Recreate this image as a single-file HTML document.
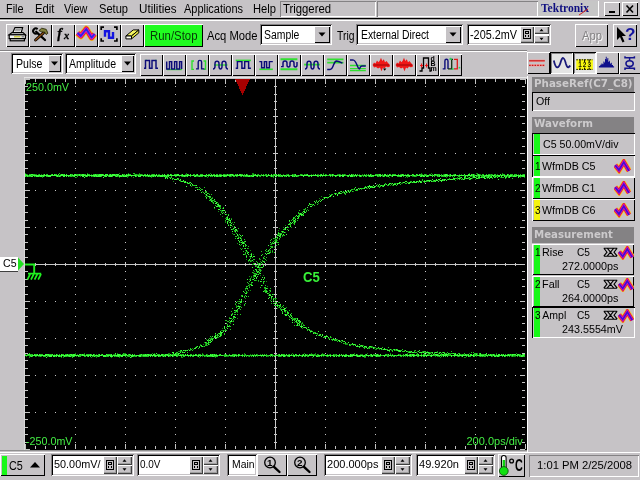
<!DOCTYPE html>
<html><head><meta charset="utf-8"><title>Tektronix</title><style>
html,body{margin:0;padding:0;background:#c6c3c6;overflow:hidden}
#s{will-change:transform;position:relative;width:640px;height:480px;background:#c6c3c6;overflow:hidden;font-family:"Liberation Sans",sans-serif}
#s div,#s span,#s svg{position:absolute}
#s span{white-space:pre;transform-origin:0 0}
.r{box-shadow:inset 1px 1px #fff,inset -1px -1px #000,inset -2px -2px #848284}
.r1{box-shadow:inset 1px 1px #fff,inset -1px -1px #000}
.r2{box-shadow:inset 1px 1px #fff,inset -1px -1px #404040,inset -2px -2px #a0a0a0}
.s{box-shadow:inset 1px 1px #848284,inset -1px -1px #fff,inset 2px 2px #000,inset -2px -2px #c6c3c6}
.s1{box-shadow:inset 1px 1px #848284,inset -1px -1px #fff}
.p{box-shadow:inset 1px 1px #000,inset -1px -1px #fff,inset 2px 2px #848284}
.p1{box-shadow:inset 1px 1px #000,inset -1px -1px #fff}
</style></head><body><div id="s">
<div style="left:25px;top:79px;width:502px;height:371px;background:#000;"></div>
<svg style="left:25px;top:79px" width="501" height="371" viewBox="0 0 501 371" shape-rendering="crispEdges"><path d="M10 37.5h1M10 74.5h1M10 111.5h1M10 148.5h1M10 222.5h1M10 259.5h1M10 296.5h1M10 333.5h1M20 37.5h1M20 74.5h1M20 111.5h1M20 148.5h1M20 222.5h1M20 259.5h1M20 296.5h1M20 333.5h1M30 37.5h1M30 74.5h1M30 111.5h1M30 148.5h1M30 222.5h1M30 259.5h1M30 296.5h1M30 333.5h1M40 37.5h1M40 74.5h1M40 111.5h1M40 148.5h1M40 222.5h1M40 259.5h1M40 296.5h1M40 333.5h1M50 7.5h1M50 15.5h1M50 22.5h1M50 30.5h1M50 37.5h1M50 44.5h1M50 52.5h1M50 59.5h1M50 67.5h1M50 74.5h1M50 81.5h1M50 89.5h1M50 96.5h1M50 104.5h1M50 111.5h1M50 118.5h1M50 126.5h1M50 133.5h1M50 141.5h1M50 148.5h1M50 155.5h1M50 163.5h1M50 170.5h1M50 178.5h1M50 185.5h1M50 192.5h1M50 200.5h1M50 207.5h1M50 215.5h1M50 222.5h1M50 229.5h1M50 237.5h1M50 244.5h1M50 252.5h1M50 259.5h1M50 266.5h1M50 274.5h1M50 281.5h1M50 289.5h1M50 296.5h1M50 303.5h1M50 311.5h1M50 318.5h1M50 326.5h1M50 333.5h1M50 340.5h1M50 348.5h1M50 355.5h1M50 363.5h1M60 37.5h1M60 74.5h1M60 111.5h1M60 148.5h1M60 222.5h1M60 259.5h1M60 296.5h1M60 333.5h1M70 37.5h1M70 74.5h1M70 111.5h1M70 148.5h1M70 222.5h1M70 259.5h1M70 296.5h1M70 333.5h1M80 37.5h1M80 74.5h1M80 111.5h1M80 148.5h1M80 222.5h1M80 259.5h1M80 296.5h1M80 333.5h1M90 37.5h1M90 74.5h1M90 111.5h1M90 148.5h1M90 222.5h1M90 259.5h1M90 296.5h1M90 333.5h1M100 7.5h1M100 15.5h1M100 22.5h1M100 30.5h1M100 37.5h1M100 44.5h1M100 52.5h1M100 59.5h1M100 67.5h1M100 74.5h1M100 81.5h1M100 89.5h1M100 96.5h1M100 104.5h1M100 111.5h1M100 118.5h1M100 126.5h1M100 133.5h1M100 141.5h1M100 148.5h1M100 155.5h1M100 163.5h1M100 170.5h1M100 178.5h1M100 185.5h1M100 192.5h1M100 200.5h1M100 207.5h1M100 215.5h1M100 222.5h1M100 229.5h1M100 237.5h1M100 244.5h1M100 252.5h1M100 259.5h1M100 266.5h1M100 274.5h1M100 281.5h1M100 289.5h1M100 296.5h1M100 303.5h1M100 311.5h1M100 318.5h1M100 326.5h1M100 333.5h1M100 340.5h1M100 348.5h1M100 355.5h1M100 363.5h1M110 37.5h1M110 74.5h1M110 111.5h1M110 148.5h1M110 222.5h1M110 259.5h1M110 296.5h1M110 333.5h1M120 37.5h1M120 74.5h1M120 111.5h1M120 148.5h1M120 222.5h1M120 259.5h1M120 296.5h1M120 333.5h1M130 37.5h1M130 74.5h1M130 111.5h1M130 148.5h1M130 222.5h1M130 259.5h1M130 296.5h1M130 333.5h1M140 37.5h1M140 74.5h1M140 111.5h1M140 148.5h1M140 222.5h1M140 259.5h1M140 296.5h1M140 333.5h1M150 7.5h1M150 15.5h1M150 22.5h1M150 30.5h1M150 37.5h1M150 44.5h1M150 52.5h1M150 59.5h1M150 67.5h1M150 74.5h1M150 81.5h1M150 89.5h1M150 96.5h1M150 104.5h1M150 111.5h1M150 118.5h1M150 126.5h1M150 133.5h1M150 141.5h1M150 148.5h1M150 155.5h1M150 163.5h1M150 170.5h1M150 178.5h1M150 185.5h1M150 192.5h1M150 200.5h1M150 207.5h1M150 215.5h1M150 222.5h1M150 229.5h1M150 237.5h1M150 244.5h1M150 252.5h1M150 259.5h1M150 266.5h1M150 274.5h1M150 281.5h1M150 289.5h1M150 296.5h1M150 303.5h1M150 311.5h1M150 318.5h1M150 326.5h1M150 333.5h1M150 340.5h1M150 348.5h1M150 355.5h1M150 363.5h1M160 37.5h1M160 74.5h1M160 111.5h1M160 148.5h1M160 222.5h1M160 259.5h1M160 296.5h1M160 333.5h1M170 37.5h1M170 74.5h1M170 111.5h1M170 148.5h1M170 222.5h1M170 259.5h1M170 296.5h1M170 333.5h1M180 37.5h1M180 74.5h1M180 111.5h1M180 148.5h1M180 222.5h1M180 259.5h1M180 296.5h1M180 333.5h1M190 37.5h1M190 74.5h1M190 111.5h1M190 148.5h1M190 222.5h1M190 259.5h1M190 296.5h1M190 333.5h1M200 7.5h1M200 15.5h1M200 22.5h1M200 30.5h1M200 37.5h1M200 44.5h1M200 52.5h1M200 59.5h1M200 67.5h1M200 74.5h1M200 81.5h1M200 89.5h1M200 96.5h1M200 104.5h1M200 111.5h1M200 118.5h1M200 126.5h1M200 133.5h1M200 141.5h1M200 148.5h1M200 155.5h1M200 163.5h1M200 170.5h1M200 178.5h1M200 185.5h1M200 192.5h1M200 200.5h1M200 207.5h1M200 215.5h1M200 222.5h1M200 229.5h1M200 237.5h1M200 244.5h1M200 252.5h1M200 259.5h1M200 266.5h1M200 274.5h1M200 281.5h1M200 289.5h1M200 296.5h1M200 303.5h1M200 311.5h1M200 318.5h1M200 326.5h1M200 333.5h1M200 340.5h1M200 348.5h1M200 355.5h1M200 363.5h1M210 37.5h1M210 74.5h1M210 111.5h1M210 148.5h1M210 222.5h1M210 259.5h1M210 296.5h1M210 333.5h1M220 37.5h1M220 74.5h1M220 111.5h1M220 148.5h1M220 222.5h1M220 259.5h1M220 296.5h1M220 333.5h1M230 37.5h1M230 74.5h1M230 111.5h1M230 148.5h1M230 222.5h1M230 259.5h1M230 296.5h1M230 333.5h1M240 37.5h1M240 74.5h1M240 111.5h1M240 148.5h1M240 222.5h1M240 259.5h1M240 296.5h1M240 333.5h1M250 37.5h1M250 74.5h1M250 111.5h1M250 148.5h1M250 222.5h1M250 259.5h1M250 296.5h1M250 333.5h1M260 37.5h1M260 74.5h1M260 111.5h1M260 148.5h1M260 222.5h1M260 259.5h1M260 296.5h1M260 333.5h1M270 37.5h1M270 74.5h1M270 111.5h1M270 148.5h1M270 222.5h1M270 259.5h1M270 296.5h1M270 333.5h1M280 37.5h1M280 74.5h1M280 111.5h1M280 148.5h1M280 222.5h1M280 259.5h1M280 296.5h1M280 333.5h1M290 37.5h1M290 74.5h1M290 111.5h1M290 148.5h1M290 222.5h1M290 259.5h1M290 296.5h1M290 333.5h1M300 7.5h1M300 15.5h1M300 22.5h1M300 30.5h1M300 37.5h1M300 44.5h1M300 52.5h1M300 59.5h1M300 67.5h1M300 74.5h1M300 81.5h1M300 89.5h1M300 96.5h1M300 104.5h1M300 111.5h1M300 118.5h1M300 126.5h1M300 133.5h1M300 141.5h1M300 148.5h1M300 155.5h1M300 163.5h1M300 170.5h1M300 178.5h1M300 185.5h1M300 192.5h1M300 200.5h1M300 207.5h1M300 215.5h1M300 222.5h1M300 229.5h1M300 237.5h1M300 244.5h1M300 252.5h1M300 259.5h1M300 266.5h1M300 274.5h1M300 281.5h1M300 289.5h1M300 296.5h1M300 303.5h1M300 311.5h1M300 318.5h1M300 326.5h1M300 333.5h1M300 340.5h1M300 348.5h1M300 355.5h1M300 363.5h1M310 37.5h1M310 74.5h1M310 111.5h1M310 148.5h1M310 222.5h1M310 259.5h1M310 296.5h1M310 333.5h1M320 37.5h1M320 74.5h1M320 111.5h1M320 148.5h1M320 222.5h1M320 259.5h1M320 296.5h1M320 333.5h1M330 37.5h1M330 74.5h1M330 111.5h1M330 148.5h1M330 222.5h1M330 259.5h1M330 296.5h1M330 333.5h1M340 37.5h1M340 74.5h1M340 111.5h1M340 148.5h1M340 222.5h1M340 259.5h1M340 296.5h1M340 333.5h1M350 7.5h1M350 15.5h1M350 22.5h1M350 30.5h1M350 37.5h1M350 44.5h1M350 52.5h1M350 59.5h1M350 67.5h1M350 74.5h1M350 81.5h1M350 89.5h1M350 96.5h1M350 104.5h1M350 111.5h1M350 118.5h1M350 126.5h1M350 133.5h1M350 141.5h1M350 148.5h1M350 155.5h1M350 163.5h1M350 170.5h1M350 178.5h1M350 185.5h1M350 192.5h1M350 200.5h1M350 207.5h1M350 215.5h1M350 222.5h1M350 229.5h1M350 237.5h1M350 244.5h1M350 252.5h1M350 259.5h1M350 266.5h1M350 274.5h1M350 281.5h1M350 289.5h1M350 296.5h1M350 303.5h1M350 311.5h1M350 318.5h1M350 326.5h1M350 333.5h1M350 340.5h1M350 348.5h1M350 355.5h1M350 363.5h1M360 37.5h1M360 74.5h1M360 111.5h1M360 148.5h1M360 222.5h1M360 259.5h1M360 296.5h1M360 333.5h1M370 37.5h1M370 74.5h1M370 111.5h1M370 148.5h1M370 222.5h1M370 259.5h1M370 296.5h1M370 333.5h1M380 37.5h1M380 74.5h1M380 111.5h1M380 148.5h1M380 222.5h1M380 259.5h1M380 296.5h1M380 333.5h1M390 37.5h1M390 74.5h1M390 111.5h1M390 148.5h1M390 222.5h1M390 259.5h1M390 296.5h1M390 333.5h1M400 7.5h1M400 15.5h1M400 22.5h1M400 30.5h1M400 37.5h1M400 44.5h1M400 52.5h1M400 59.5h1M400 67.5h1M400 74.5h1M400 81.5h1M400 89.5h1M400 96.5h1M400 104.5h1M400 111.5h1M400 118.5h1M400 126.5h1M400 133.5h1M400 141.5h1M400 148.5h1M400 155.5h1M400 163.5h1M400 170.5h1M400 178.5h1M400 185.5h1M400 192.5h1M400 200.5h1M400 207.5h1M400 215.5h1M400 222.5h1M400 229.5h1M400 237.5h1M400 244.5h1M400 252.5h1M400 259.5h1M400 266.5h1M400 274.5h1M400 281.5h1M400 289.5h1M400 296.5h1M400 303.5h1M400 311.5h1M400 318.5h1M400 326.5h1M400 333.5h1M400 340.5h1M400 348.5h1M400 355.5h1M400 363.5h1M410 37.5h1M410 74.5h1M410 111.5h1M410 148.5h1M410 222.5h1M410 259.5h1M410 296.5h1M410 333.5h1M420 37.5h1M420 74.5h1M420 111.5h1M420 148.5h1M420 222.5h1M420 259.5h1M420 296.5h1M420 333.5h1M430 37.5h1M430 74.5h1M430 111.5h1M430 148.5h1M430 222.5h1M430 259.5h1M430 296.5h1M430 333.5h1M440 37.5h1M440 74.5h1M440 111.5h1M440 148.5h1M440 222.5h1M440 259.5h1M440 296.5h1M440 333.5h1M450 7.5h1M450 15.5h1M450 22.5h1M450 30.5h1M450 37.5h1M450 44.5h1M450 52.5h1M450 59.5h1M450 67.5h1M450 74.5h1M450 81.5h1M450 89.5h1M450 96.5h1M450 104.5h1M450 111.5h1M450 118.5h1M450 126.5h1M450 133.5h1M450 141.5h1M450 148.5h1M450 155.5h1M450 163.5h1M450 170.5h1M450 178.5h1M450 185.5h1M450 192.5h1M450 200.5h1M450 207.5h1M450 215.5h1M450 222.5h1M450 229.5h1M450 237.5h1M450 244.5h1M450 252.5h1M450 259.5h1M450 266.5h1M450 274.5h1M450 281.5h1M450 289.5h1M450 296.5h1M450 303.5h1M450 311.5h1M450 318.5h1M450 326.5h1M450 333.5h1M450 340.5h1M450 348.5h1M450 355.5h1M450 363.5h1M460 37.5h1M460 74.5h1M460 111.5h1M460 148.5h1M460 222.5h1M460 259.5h1M460 296.5h1M460 333.5h1M470 37.5h1M470 74.5h1M470 111.5h1M470 148.5h1M470 222.5h1M470 259.5h1M470 296.5h1M470 333.5h1M480 37.5h1M480 74.5h1M480 111.5h1M480 148.5h1M480 222.5h1M480 259.5h1M480 296.5h1M480 333.5h1M490 37.5h1M490 74.5h1M490 111.5h1M490 148.5h1M490 222.5h1M490 259.5h1M490 296.5h1M490 333.5h1" stroke="#c4c4c4" stroke-width="1" fill="none"/><path d="M0.5 0v5M0.5 370v-5M10.5 0v3M10.5 370v-3M20.5 0v3M20.5 370v-3M30.5 0v3M30.5 370v-3M40.5 0v3M40.5 370v-3M50.5 0v5M50.5 370v-5M60.5 0v3M60.5 370v-3M70.5 0v3M70.5 370v-3M80.5 0v3M80.5 370v-3M90.5 0v3M90.5 370v-3M100.5 0v5M100.5 370v-5M110.5 0v3M110.5 370v-3M120.5 0v3M120.5 370v-3M130.5 0v3M130.5 370v-3M140.5 0v3M140.5 370v-3M150.5 0v5M150.5 370v-5M160.5 0v3M160.5 370v-3M170.5 0v3M170.5 370v-3M180.5 0v3M180.5 370v-3M190.5 0v3M190.5 370v-3M200.5 0v5M200.5 370v-5M210.5 0v3M210.5 370v-3M220.5 0v3M220.5 370v-3M230.5 0v3M230.5 370v-3M240.5 0v3M240.5 370v-3M250.5 0v5M250.5 370v-5M260.5 0v3M260.5 370v-3M270.5 0v3M270.5 370v-3M280.5 0v3M280.5 370v-3M290.5 0v3M290.5 370v-3M300.5 0v5M300.5 370v-5M310.5 0v3M310.5 370v-3M320.5 0v3M320.5 370v-3M330.5 0v3M330.5 370v-3M340.5 0v3M340.5 370v-3M350.5 0v5M350.5 370v-5M360.5 0v3M360.5 370v-3M370.5 0v3M370.5 370v-3M380.5 0v3M380.5 370v-3M390.5 0v3M390.5 370v-3M400.5 0v5M400.5 370v-5M410.5 0v3M410.5 370v-3M420.5 0v3M420.5 370v-3M430.5 0v3M430.5 370v-3M440.5 0v3M440.5 370v-3M450.5 0v5M450.5 370v-5M460.5 0v3M460.5 370v-3M470.5 0v3M470.5 370v-3M480.5 0v3M480.5 370v-3M490.5 0v3M490.5 370v-3M500.5 0v5M500.5 370v-5M0 0.5h5M500 0.5h-5M0 7.5h3M500 7.5h-3M0 15.5h3M500 15.5h-3M0 22.5h3M500 22.5h-3M0 30.5h3M500 30.5h-3M0 37.5h5M500 37.5h-5M0 44.5h3M500 44.5h-3M0 52.5h3M500 52.5h-3M0 59.5h3M500 59.5h-3M0 67.5h3M500 67.5h-3M0 74.5h5M500 74.5h-5M0 81.5h3M500 81.5h-3M0 89.5h3M500 89.5h-3M0 96.5h3M500 96.5h-3M0 104.5h3M500 104.5h-3M0 111.5h5M500 111.5h-5M0 118.5h3M500 118.5h-3M0 126.5h3M500 126.5h-3M0 133.5h3M500 133.5h-3M0 141.5h3M500 141.5h-3M0 148.5h5M500 148.5h-5M0 155.5h3M500 155.5h-3M0 163.5h3M500 163.5h-3M0 170.5h3M500 170.5h-3M0 178.5h3M500 178.5h-3M0 185.5h5M500 185.5h-5M0 192.5h3M500 192.5h-3M0 200.5h3M500 200.5h-3M0 207.5h3M500 207.5h-3M0 215.5h3M500 215.5h-3M0 222.5h5M500 222.5h-5M0 229.5h3M500 229.5h-3M0 237.5h3M500 237.5h-3M0 244.5h3M500 244.5h-3M0 252.5h3M500 252.5h-3M0 259.5h5M500 259.5h-5M0 266.5h3M500 266.5h-3M0 274.5h3M500 274.5h-3M0 281.5h3M500 281.5h-3M0 289.5h3M500 289.5h-3M0 296.5h5M500 296.5h-5M0 303.5h3M500 303.5h-3M0 311.5h3M500 311.5h-3M0 318.5h3M500 318.5h-3M0 326.5h3M500 326.5h-3M0 333.5h5M500 333.5h-5M0 340.5h3M500 340.5h-3M0 348.5h3M500 348.5h-3M0 355.5h3M500 355.5h-3M0 363.5h3M500 363.5h-3M0 370.5h5M500 370.5h-5" stroke="#c4c4c4" stroke-width="1" fill="none"/><path d="M0 185.5H500M250.5 0V370M10.5 184v3M20.5 184v3M30.5 184v3M40.5 184v3M50.5 183v5M60.5 184v3M70.5 184v3M80.5 184v3M90.5 184v3M100.5 183v5M110.5 184v3M120.5 184v3M130.5 184v3M140.5 184v3M150.5 183v5M160.5 184v3M170.5 184v3M180.5 184v3M190.5 184v3M200.5 183v5M210.5 184v3M220.5 184v3M230.5 184v3M240.5 184v3M250.5 183v5M260.5 184v3M270.5 184v3M280.5 184v3M290.5 184v3M300.5 183v5M310.5 184v3M320.5 184v3M330.5 184v3M340.5 184v3M350.5 183v5M360.5 184v3M370.5 184v3M380.5 184v3M390.5 184v3M400.5 183v5M410.5 184v3M420.5 184v3M430.5 184v3M440.5 184v3M450.5 183v5M460.5 184v3M470.5 184v3M480.5 184v3M490.5 184v3M249 7.5h3M249 15.5h3M249 22.5h3M249 30.5h3M248 37.5h5M249 44.5h3M249 52.5h3M249 59.5h3M249 67.5h3M248 74.5h5M249 81.5h3M249 89.5h3M249 96.5h3M249 104.5h3M248 111.5h5M249 118.5h3M249 126.5h3M249 133.5h3M249 141.5h3M248 148.5h5M249 155.5h3M249 163.5h3M249 170.5h3M249 178.5h3M248 185.5h5M249 192.5h3M249 200.5h3M249 207.5h3M249 215.5h3M248 222.5h5M249 229.5h3M249 237.5h3M249 244.5h3M249 252.5h3M248 259.5h5M249 266.5h3M249 274.5h3M249 281.5h3M249 289.5h3M248 296.5h5M249 303.5h3M249 311.5h3M249 318.5h3M249 326.5h3M248 333.5h5M249 340.5h3M249 348.5h3M249 355.5h3M249 363.5h3" stroke="#c8c8c8" stroke-width="1" fill="none"/><path d="M210 0L225 0L217.5 16Z" fill="#a80000"/><path d="M0 94.5h1M1 97.5h1M1 277.5h1M2 95.5h1M4 277.5h1M4 278.5h1M10 95.5h1M10 97.5h1M11 95.5h1M11 277.5h1M13 95.5h1M13 277.5h1M14 277.5h1M16 95.5h1M16 277.5h1M17 98.5h1M18 95.5h1M19 97.5h1M23 277.5h1M29 275.5h1M30 277.5h1M32 275.5h1M35 95.5h1M36 278.5h1M38 277.5h1M38 278.5h1M42 277.5h1M43 275.5h1M44 97.5h1M46 277.5h1M47 97.5h1M50 274.5h1M51 98.5h1M51 277.5h1M52 275.5h1M55 97.5h1M59 274.5h1M62 94.5h1M64 97.5h1M66 95.5h1M66 278.5h1M67 97.5h1M68 277.5h1M70 277.5h1M71 275.5h1M71 277.5h1M71 278.5h1M86 95.5h1M86 278.5h1M88 275.5h1M89 275.5h1M90 277.5h1M92 274.5h1M93 97.5h1M94 94.5h1M94 98.5h1M94 278.5h1M95 277.5h1M98 95.5h1M99 274.5h1M100 274.5h1M101 278.5h1M102 95.5h1M102 97.5h1M102 98.5h1M102 277.5h1M103 94.5h1M103 97.5h1M106 278.5h1M108 98.5h1M109 95.5h1M109 277.5h1M112 95.5h1M113 95.5h1M113 277.5h1M114 94.5h1M114 275.5h1M116 277.5h1M117 95.5h1M117 275.5h1M117 277.5h1M121 97.5h1M122 97.5h1M124 95.5h1M126 95.5h1M126 98.5h1M127 274.5h1M129 97.5h1M129 274.5h1M130 275.5h1M131 277.5h1M133 95.5h1M134 95.5h1M137 277.5h1M139 275.5h1M139 277.5h1M143 274.5h1M144 274.5h1M144 275.5h1M144 277.5h1M145 98.5h1M145 277.5h1M146 275.5h1M148 102.5h1M148 277.5h1M151 97.5h1M152 100.5h1M152 274.5h1M153 272.5h1M154 97.5h1M154 272.5h1M155 102.5h1M156 95.5h1M156 97.5h1M156 272.5h1M156 275.5h1M156 278.5h1M157 272.5h1M157 278.5h1M160 95.5h1M160 272.5h1M161 94.5h1M161 95.5h1M161 97.5h1M161 103.5h1M163 270.5h1M165 271.5h1M166 107.5h1M167 269.5h1M168 270.5h1M168 275.5h1M171 97.5h1M171 267.5h1M172 97.5h1M172 277.5h1M173 110.5h1M174 278.5h1M175 265.5h1M177 112.5h1M177 274.5h1M177 277.5h1M178 265.5h1M178 267.5h1M178 275.5h1M179 97.5h1M179 263.5h1M180 115.5h1M180 264.5h1M180 265.5h1M180 277.5h1M181 260.5h1M181 277.5h1M182 98.5h1M182 116.5h1M182 117.5h1M182 266.5h1M182 275.5h1M184 119.5h1M184 265.5h1M185 94.5h1M185 259.5h1M185 262.5h1M186 97.5h1M186 258.5h1M187 118.5h1M187 123.5h1M189 121.5h1M189 129.5h1M190 97.5h1M190 255.5h1M190 275.5h1M190 278.5h1M191 256.5h1M192 126.5h1M193 124.5h1M193 132.5h1M193 258.5h1M194 128.5h1M194 255.5h1M195 128.5h1M196 95.5h1M196 131.5h1M196 132.5h1M196 251.5h1M197 129.5h1M197 132.5h1M197 137.5h1M197 249.5h1M197 251.5h1M199 134.5h1M199 251.5h1M199 275.5h1M200 95.5h1M200 139.5h1M200 142.5h1M200 143.5h1M201 95.5h1M201 139.5h1M201 248.5h1M201 275.5h1M201 277.5h1M202 277.5h1M203 95.5h1M203 141.5h1M203 142.5h1M203 145.5h1M203 277.5h1M204 238.5h1M205 243.5h1M205 244.5h1M205 277.5h1M206 97.5h1M206 139.5h1M206 277.5h1M207 143.5h1M207 147.5h1M207 154.5h1M207 242.5h1M207 277.5h1M208 95.5h1M208 150.5h1M208 155.5h1M208 241.5h1M209 149.5h1M209 152.5h1M209 240.5h1M210 153.5h1M210 224.5h1M210 232.5h1M211 95.5h1M211 226.5h1M211 227.5h1M211 275.5h1M212 97.5h1M212 151.5h1M212 164.5h1M212 222.5h1M212 233.5h1M212 239.5h1M213 156.5h1M213 157.5h1M213 222.5h1M213 226.5h1M214 158.5h1M215 97.5h1M215 163.5h1M215 166.5h1M215 169.5h1M215 225.5h1M216 159.5h1M216 217.5h1M217 169.5h1M218 222.5h1M219 97.5h1M219 163.5h1M219 274.5h1M219 275.5h1M220 171.5h1M220 175.5h1M220 210.5h1M220 211.5h1M220 219.5h1M221 180.5h1M221 208.5h1M222 95.5h1M222 172.5h1M222 210.5h1M222 213.5h1M223 169.5h1M223 182.5h1M223 277.5h1M224 177.5h1M224 184.5h1M224 197.5h1M224 200.5h1M224 205.5h1M224 206.5h1M224 207.5h1M225 171.5h1M225 175.5h1M225 178.5h1M225 181.5h1M225 211.5h1M225 275.5h1M226 181.5h1M226 182.5h1M226 197.5h1M226 198.5h1M226 204.5h1M227 94.5h1M227 95.5h1M227 275.5h1M228 94.5h1M228 175.5h1M228 182.5h1M228 184.5h1M228 193.5h1M228 194.5h1M228 197.5h1M228 198.5h1M229 95.5h1M229 192.5h1M229 195.5h1M230 195.5h1M231 97.5h1M231 186.5h1M231 187.5h1M231 194.5h1M231 201.5h1M232 95.5h1M232 184.5h1M232 187.5h1M232 195.5h1M232 275.5h1M232 277.5h1M233 184.5h1M233 190.5h1M233 193.5h1M233 202.5h1M234 97.5h1M234 180.5h1M234 189.5h1M235 180.5h1M235 182.5h1M235 184.5h1M235 186.5h1M235 196.5h1M235 275.5h1M236 191.5h1M237 182.5h1M237 206.5h1M238 97.5h1M238 196.5h1M239 209.5h1M239 212.5h1M241 181.5h1M241 202.5h1M242 172.5h1M242 207.5h1M242 277.5h1M243 216.5h1M243 277.5h1M244 171.5h1M244 213.5h1M245 97.5h1M245 165.5h1M245 171.5h1M245 172.5h1M245 221.5h1M246 164.5h1M246 220.5h1M247 171.5h1M247 173.5h1M248 98.5h1M249 159.5h1M249 161.5h1M249 167.5h1M249 168.5h1M249 219.5h1M249 222.5h1M250 98.5h1M250 221.5h1M251 157.5h1M251 219.5h1M251 275.5h1M252 155.5h1M252 161.5h1M252 229.5h1M253 151.5h1M253 155.5h1M253 223.5h1M253 228.5h1M254 95.5h1M254 149.5h1M254 155.5h1M254 160.5h1M255 230.5h1M256 277.5h1M257 157.5h1M258 95.5h1M258 148.5h1M258 153.5h1M258 156.5h1M259 149.5h1M259 235.5h1M260 97.5h1M260 146.5h1M260 153.5h1M260 233.5h1M260 277.5h1M261 95.5h1M261 228.5h1M261 231.5h1M262 95.5h1M262 277.5h1M263 275.5h1M264 238.5h1M265 144.5h1M266 148.5h1M267 239.5h1M267 274.5h1M268 95.5h1M268 140.5h1M268 144.5h1M268 239.5h1M269 139.5h1M269 243.5h1M270 97.5h1M270 139.5h1M270 141.5h1M270 143.5h1M271 239.5h1M271 277.5h1M272 241.5h1M273 97.5h1M273 246.5h1M274 244.5h1M276 244.5h1M276 277.5h1M277 95.5h1M277 136.5h1M277 243.5h1M277 249.5h1M277 275.5h1M278 130.5h1M278 135.5h1M278 245.5h1M279 131.5h1M279 274.5h1M280 95.5h1M280 130.5h1M281 248.5h1M281 275.5h1M282 130.5h1M282 275.5h1M285 251.5h1M285 253.5h1M286 95.5h1M286 251.5h1M286 274.5h1M287 125.5h1M287 278.5h1M288 95.5h1M288 275.5h1M289 254.5h1M290 124.5h1M290 274.5h1M290 275.5h1M292 95.5h1M292 255.5h1M293 95.5h1M293 124.5h1M293 275.5h1M294 119.5h1M295 120.5h1M296 117.5h1M297 274.5h1M298 94.5h1M298 118.5h1M298 120.5h1M298 277.5h1M299 258.5h1M300 97.5h1M301 95.5h1M301 277.5h1M302 119.5h1M303 259.5h1M303 277.5h1M304 115.5h1M304 259.5h1M304 275.5h1M306 95.5h1M306 258.5h1M309 275.5h1M310 275.5h1M311 97.5h1M312 95.5h1M312 260.5h1M313 95.5h1M313 113.5h1M315 95.5h1M317 262.5h1M318 95.5h1M318 113.5h1M318 275.5h1M319 264.5h1M320 95.5h1M320 265.5h1M321 264.5h1M321 265.5h1M322 111.5h1M322 113.5h1M322 264.5h1M322 265.5h1M324 112.5h1M325 265.5h1M326 111.5h1M327 95.5h1M328 97.5h1M328 110.5h1M328 112.5h1M328 266.5h1M329 274.5h1M329 275.5h1M331 277.5h1M332 275.5h1M334 95.5h1M334 109.5h1M335 275.5h1M336 110.5h1M336 267.5h1M336 275.5h1M337 95.5h1M337 275.5h1M338 266.5h1M339 278.5h1M340 268.5h1M340 278.5h1M341 109.5h1M342 109.5h1M342 274.5h1M343 97.5h1M343 269.5h1M345 268.5h1M345 277.5h1M346 95.5h1M347 267.5h1M347 268.5h1M349 269.5h1M349 275.5h1M350 268.5h1M350 270.5h1M350 275.5h1M350 277.5h1M351 270.5h1M352 105.5h1M352 107.5h1M353 269.5h1M353 275.5h1M354 97.5h1M354 107.5h1M354 270.5h1M355 277.5h1M357 97.5h1M357 270.5h1M360 105.5h1M362 95.5h1M362 275.5h1M364 98.5h1M364 270.5h1M365 106.5h1M365 274.5h1M366 97.5h1M366 104.5h1M366 270.5h1M366 271.5h1M367 106.5h1M370 270.5h1M370 271.5h1M371 104.5h1M371 277.5h1M374 275.5h1M375 95.5h1M375 275.5h1M375 277.5h1M376 104.5h1M377 103.5h1M377 104.5h1M379 271.5h1M380 95.5h1M380 98.5h1M380 277.5h1M382 97.5h1M382 98.5h1M382 274.5h1M383 103.5h1M383 272.5h1M384 277.5h1M386 103.5h1M386 273.5h1M387 97.5h1M388 97.5h1M389 271.5h1M389 277.5h1M391 97.5h1M392 272.5h1M393 102.5h1M396 94.5h1M396 274.5h1M397 95.5h1M397 97.5h1M397 272.5h1M399 273.5h1M401 95.5h1M401 274.5h1M402 102.5h1M402 272.5h1M403 102.5h1M403 275.5h1M404 275.5h1M405 273.5h1M405 277.5h1M406 94.5h1M406 101.5h1M410 277.5h1M412 272.5h1M412 277.5h1M413 274.5h1M413 275.5h1M413 277.5h1M414 101.5h1M415 278.5h1M418 95.5h1M420 274.5h1M421 97.5h1M421 98.5h1M424 95.5h1M424 275.5h1M425 274.5h1M428 95.5h1M428 98.5h1M430 101.5h1M431 275.5h1M432 98.5h1M432 99.5h1M432 100.5h1M432 277.5h1M434 95.5h1M434 98.5h1M434 277.5h1M436 95.5h1M436 275.5h1M436 277.5h1M437 100.5h1M439 275.5h1M439 278.5h1M440 278.5h1M443 98.5h1M444 94.5h1M444 99.5h1M444 274.5h1M446 97.5h1M447 97.5h1M447 98.5h1M447 99.5h1M449 95.5h1M450 100.5h1M451 94.5h1M451 98.5h1M451 277.5h1M452 94.5h1M452 97.5h1M452 274.5h1M452 275.5h1M454 277.5h1M455 95.5h1M456 277.5h1M458 277.5h1M461 98.5h1M462 99.5h1M464 98.5h1M464 275.5h1M465 95.5h1M467 95.5h1M467 98.5h1M467 277.5h1M469 97.5h1M471 274.5h1M471 277.5h1M472 95.5h1M472 97.5h1M474 277.5h1M475 98.5h1M477 94.5h1M477 275.5h1M482 97.5h1M482 277.5h1M486 277.5h1M488 277.5h1M489 277.5h1M490 277.5h1M491 274.5h1M493 95.5h1M495 98.5h1M497 95.5h1M499 98.5h1" stroke="#128a12" stroke-width="1" fill="none"/><path d="M0 275.5h1M1 95.5h1M2 275.5h1M2 276.5h1M3 96.5h1M3 97.5h1M3 276.5h1M4 95.5h1M4 97.5h1M4 274.5h1M4 276.5h1M5 95.5h1M5 97.5h1M5 275.5h1M5 277.5h1M6 96.5h1M6 275.5h1M6 276.5h1M7 96.5h1M7 275.5h1M7 277.5h1M8 95.5h1M9 95.5h1M9 97.5h1M10 275.5h1M10 277.5h1M11 275.5h1M14 95.5h1M14 97.5h1M15 275.5h1M15 277.5h1M16 275.5h1M17 97.5h1M17 275.5h1M18 277.5h1M19 277.5h1M20 277.5h1M21 95.5h1M21 97.5h1M22 95.5h1M22 97.5h1M22 276.5h1M22 277.5h1M24 275.5h1M25 275.5h1M26 95.5h1M26 275.5h1M27 276.5h1M30 95.5h1M31 95.5h1M31 97.5h1M33 96.5h1M33 97.5h1M34 94.5h1M34 96.5h1M34 275.5h1M35 97.5h1M35 276.5h1M35 277.5h1M37 275.5h1M38 95.5h1M38 275.5h1M40 275.5h1M40 277.5h1M41 275.5h1M41 277.5h1M43 277.5h1M44 275.5h1M45 97.5h1M45 276.5h1M46 95.5h1M46 96.5h1M46 97.5h1M47 95.5h1M47 275.5h1M47 277.5h1M47 278.5h1M48 97.5h1M49 277.5h1M50 98.5h1M50 275.5h1M51 95.5h1M52 95.5h1M52 96.5h1M52 97.5h1M53 95.5h1M53 96.5h1M54 276.5h1M54 277.5h1M55 95.5h1M55 96.5h1M55 276.5h1M55 277.5h1M56 95.5h1M56 275.5h1M56 276.5h1M58 275.5h1M59 95.5h1M59 275.5h1M59 277.5h1M60 95.5h1M60 97.5h1M60 276.5h1M60 277.5h1M61 275.5h1M62 97.5h1M62 275.5h1M62 277.5h1M63 95.5h1M63 275.5h1M64 95.5h1M64 275.5h1M66 97.5h1M66 275.5h1M67 277.5h1M68 95.5h1M68 97.5h1M69 95.5h1M69 275.5h1M69 276.5h1M70 97.5h1M71 95.5h1M72 95.5h1M72 96.5h1M72 277.5h1M73 95.5h1M73 275.5h1M73 276.5h1M74 277.5h1M76 97.5h1M76 275.5h1M77 276.5h1M78 95.5h1M79 97.5h1M81 96.5h1M81 276.5h1M81 277.5h1M82 275.5h1M82 277.5h1M83 96.5h1M83 97.5h1M83 275.5h1M83 277.5h1M84 95.5h1M84 275.5h1M85 275.5h1M87 97.5h1M87 276.5h1M89 277.5h1M90 95.5h1M90 97.5h1M90 275.5h1M91 96.5h1M91 277.5h1M92 97.5h1M92 277.5h1M93 96.5h1M94 277.5h1M95 275.5h1M96 96.5h1M97 97.5h1M97 275.5h1M98 274.5h1M98 275.5h1M99 95.5h1M99 96.5h1M99 275.5h1M100 277.5h1M101 276.5h1M103 275.5h1M103 276.5h1M103 277.5h1M104 95.5h1M104 276.5h1M104 277.5h1M105 95.5h1M105 275.5h1M106 97.5h1M108 94.5h1M108 277.5h1M109 94.5h1M109 275.5h1M110 95.5h1M110 276.5h1M110 277.5h1M111 95.5h1M111 96.5h1M111 97.5h1M111 277.5h1M112 96.5h1M114 95.5h1M114 96.5h1M115 95.5h1M115 275.5h1M116 95.5h1M116 276.5h1M117 276.5h1M118 97.5h1M118 275.5h1M118 277.5h1M119 95.5h1M119 275.5h1M119 277.5h1M120 95.5h1M120 97.5h1M120 277.5h1M121 275.5h1M121 277.5h1M122 276.5h1M122 277.5h1M123 277.5h1M124 97.5h1M124 275.5h1M125 96.5h1M125 275.5h1M126 97.5h1M127 95.5h1M127 97.5h1M127 277.5h1M128 95.5h1M129 95.5h1M129 277.5h1M132 96.5h1M132 275.5h1M133 97.5h1M133 275.5h1M134 97.5h1M134 275.5h1M134 277.5h1M135 277.5h1M137 95.5h1M138 97.5h1M138 275.5h1M138 276.5h1M140 97.5h1M141 96.5h1M141 98.5h1M141 276.5h1M142 95.5h1M142 97.5h1M142 98.5h1M143 95.5h1M143 275.5h1M144 98.5h1M145 276.5h1M146 95.5h1M146 97.5h1M146 98.5h1M147 99.5h1M147 100.5h1M147 275.5h1M148 99.5h1M148 275.5h1M148 276.5h1M149 95.5h1M150 95.5h1M150 97.5h1M151 95.5h1M151 273.5h1M151 274.5h1M151 275.5h1M151 277.5h1M152 273.5h1M152 275.5h1M152 276.5h1M152 277.5h1M153 99.5h1M153 100.5h1M153 276.5h1M155 101.5h1M155 271.5h1M155 272.5h1M155 275.5h1M156 277.5h1M157 97.5h1M157 275.5h1M157 276.5h1M158 97.5h1M158 102.5h1M158 273.5h1M158 275.5h1M158 277.5h1M159 102.5h1M159 271.5h1M159 276.5h1M159 277.5h1M160 97.5h1M161 271.5h1M161 276.5h1M162 104.5h1M162 273.5h1M163 95.5h1M163 277.5h1M164 103.5h1M164 104.5h1M165 97.5h1M165 105.5h1M165 269.5h1M165 270.5h1M165 275.5h1M165 277.5h1M166 96.5h1M166 270.5h1M166 275.5h1M167 106.5h1M167 271.5h1M167 276.5h1M167 277.5h1M168 95.5h1M168 106.5h1M168 277.5h1M169 95.5h1M169 96.5h1M169 106.5h1M170 106.5h1M170 108.5h1M170 268.5h1M171 95.5h1M171 108.5h1M171 275.5h1M172 108.5h1M172 276.5h1M173 96.5h1M173 97.5h1M173 269.5h1M173 275.5h1M174 96.5h1M174 108.5h1M174 110.5h1M174 267.5h1M174 275.5h1M175 95.5h1M175 97.5h1M175 109.5h1M175 266.5h1M175 275.5h1M175 277.5h1M176 95.5h1M176 97.5h1M176 110.5h1M176 267.5h1M177 95.5h1M177 97.5h1M177 110.5h1M177 275.5h1M177 276.5h1M178 113.5h1M178 276.5h1M179 108.5h1M179 267.5h1M179 276.5h1M179 277.5h1M180 112.5h1M180 113.5h1M180 117.5h1M180 266.5h1M180 276.5h1M181 96.5h1M181 97.5h1M181 112.5h1M181 113.5h1M181 119.5h1M181 263.5h1M181 264.5h1M181 265.5h1M181 266.5h1M181 275.5h1M182 264.5h1M182 276.5h1M183 95.5h1M183 97.5h1M183 114.5h1M183 260.5h1M183 261.5h1M183 262.5h1M183 264.5h1M183 277.5h1M184 95.5h1M184 115.5h1M184 118.5h1M184 121.5h1M184 259.5h1M184 263.5h1M184 277.5h1M185 97.5h1M185 117.5h1M185 118.5h1M185 121.5h1M185 257.5h1M185 260.5h1M185 277.5h1M186 115.5h1M186 119.5h1M186 120.5h1M186 121.5h1M186 259.5h1M186 260.5h1M186 275.5h1M186 277.5h1M187 97.5h1M187 119.5h1M187 121.5h1M187 122.5h1M187 259.5h1M187 261.5h1M188 95.5h1M188 121.5h1M188 123.5h1M188 124.5h1M188 259.5h1M188 275.5h1M188 276.5h1M189 95.5h1M189 122.5h1M189 277.5h1M190 126.5h1M190 277.5h1M191 95.5h1M191 259.5h1M191 275.5h1M191 277.5h1M192 95.5h1M192 123.5h1M192 256.5h1M192 257.5h1M192 258.5h1M192 277.5h1M193 96.5h1M193 97.5h1M193 127.5h1M193 254.5h1M193 256.5h1M193 276.5h1M194 95.5h1M194 97.5h1M194 275.5h1M195 95.5h1M195 126.5h1M195 127.5h1M195 129.5h1M195 131.5h1M195 135.5h1M195 254.5h1M195 257.5h1M195 276.5h1M196 97.5h1M196 133.5h1M196 255.5h1M196 256.5h1M198 95.5h1M198 97.5h1M198 128.5h1M198 133.5h1M198 251.5h1M198 276.5h1M199 95.5h1M199 254.5h1M199 255.5h1M199 276.5h1M199 277.5h1M200 97.5h1M200 132.5h1M200 141.5h1M200 241.5h1M200 250.5h1M200 251.5h1M200 276.5h1M200 277.5h1M201 97.5h1M201 135.5h1M201 138.5h1M201 241.5h1M201 251.5h1M202 137.5h1M202 242.5h1M202 245.5h1M202 246.5h1M202 276.5h1M203 135.5h1M203 242.5h1M203 276.5h1M204 95.5h1M204 97.5h1M204 140.5h1M204 143.5h1M204 239.5h1M204 241.5h1M204 243.5h1M204 246.5h1M204 247.5h1M204 275.5h1M205 97.5h1M205 142.5h1M205 145.5h1M205 247.5h1M205 250.5h1M206 96.5h1M206 140.5h1M206 232.5h1M206 235.5h1M206 239.5h1M207 150.5h1M207 229.5h1M207 234.5h1M207 235.5h1M207 240.5h1M207 275.5h1M208 97.5h1M208 145.5h1M208 238.5h1M208 239.5h1M208 242.5h1M208 275.5h1M208 276.5h1M208 277.5h1M209 96.5h1M209 97.5h1M209 143.5h1M209 147.5h1M209 151.5h1M209 155.5h1M209 233.5h1M209 235.5h1M209 238.5h1M209 275.5h1M210 95.5h1M210 151.5h1M210 157.5h1M210 159.5h1M210 225.5h1M210 231.5h1M210 233.5h1M210 235.5h1M210 275.5h1M211 97.5h1M211 154.5h1M211 157.5h1M211 228.5h1M211 232.5h1M211 277.5h1M212 152.5h1M212 227.5h1M212 231.5h1M212 232.5h1M212 235.5h1M212 276.5h1M213 149.5h1M213 158.5h1M213 224.5h1M213 277.5h1M214 155.5h1M214 163.5h1M214 220.5h1M214 222.5h1M214 224.5h1M214 228.5h1M214 229.5h1M214 275.5h1M215 158.5h1M215 161.5h1M215 222.5h1M215 227.5h1M215 230.5h1M215 235.5h1M215 276.5h1M216 95.5h1M216 97.5h1M216 157.5h1M216 160.5h1M216 165.5h1M216 170.5h1M216 216.5h1M216 221.5h1M216 223.5h1M216 228.5h1M217 95.5h1M217 162.5h1M217 163.5h1M217 216.5h1M217 275.5h1M217 277.5h1M218 97.5h1M218 172.5h1M218 276.5h1M219 95.5h1M219 96.5h1M219 160.5h1M219 162.5h1M219 164.5h1M219 169.5h1M219 175.5h1M219 213.5h1M219 217.5h1M219 218.5h1M219 225.5h1M219 226.5h1M219 276.5h1M220 97.5h1M220 166.5h1M220 167.5h1M220 173.5h1M220 174.5h1M220 209.5h1M220 216.5h1M220 224.5h1M220 275.5h1M220 276.5h1M221 97.5h1M221 166.5h1M221 172.5h1M221 176.5h1M221 178.5h1M221 207.5h1M221 209.5h1M221 212.5h1M221 213.5h1M221 276.5h1M221 277.5h1M222 97.5h1M222 169.5h1M222 173.5h1M222 203.5h1M222 207.5h1M223 96.5h1M223 167.5h1M223 181.5h1M223 204.5h1M223 206.5h1M223 211.5h1M223 217.5h1M223 276.5h1M224 181.5h1M224 202.5h1M224 208.5h1M224 276.5h1M224 277.5h1M225 96.5h1M225 97.5h1M225 179.5h1M225 182.5h1M225 199.5h1M225 200.5h1M225 205.5h1M225 276.5h1M226 97.5h1M226 174.5h1M226 203.5h1M226 205.5h1M226 276.5h1M226 277.5h1M227 96.5h1M227 178.5h1M227 185.5h1M227 193.5h1M227 200.5h1M227 203.5h1M228 95.5h1M228 180.5h1M228 185.5h1M228 191.5h1M228 196.5h1M229 180.5h1M229 194.5h1M229 197.5h1M229 201.5h1M229 275.5h1M229 276.5h1M230 186.5h1M230 187.5h1M230 194.5h1M230 201.5h1M230 277.5h1M231 182.5h1M231 190.5h1M231 192.5h1M231 275.5h1M232 183.5h1M232 192.5h1M232 276.5h1M233 95.5h1M233 96.5h1M233 186.5h1M233 201.5h1M234 179.5h1M234 186.5h1M234 188.5h1M234 190.5h1M234 191.5h1M234 193.5h1M234 194.5h1M235 96.5h1M235 97.5h1M235 188.5h1M235 190.5h1M235 191.5h1M235 192.5h1M235 208.5h1M236 95.5h1M236 96.5h1M236 172.5h1M236 202.5h1M236 277.5h1M237 175.5h1M237 181.5h1M237 184.5h1M237 275.5h1M238 95.5h1M238 178.5h1M238 179.5h1M238 202.5h1M238 203.5h1M238 204.5h1M238 277.5h1M239 96.5h1M239 177.5h1M239 179.5h1M239 182.5h1M239 199.5h1M239 202.5h1M239 208.5h1M239 211.5h1M239 275.5h1M240 95.5h1M240 96.5h1M240 171.5h1M240 180.5h1M240 206.5h1M240 208.5h1M240 209.5h1M240 210.5h1M240 211.5h1M240 212.5h1M240 213.5h1M241 95.5h1M241 96.5h1M241 170.5h1M241 172.5h1M241 178.5h1M241 211.5h1M241 213.5h1M241 275.5h1M241 276.5h1M241 277.5h1M242 96.5h1M242 97.5h1M242 209.5h1M242 212.5h1M242 276.5h1M243 172.5h1M243 214.5h1M243 276.5h1M244 170.5h1M244 174.5h1M244 211.5h1M245 96.5h1M245 161.5h1M245 167.5h1M245 173.5h1M245 209.5h1M245 211.5h1M245 212.5h1M245 215.5h1M245 275.5h1M245 276.5h1M245 277.5h1M246 160.5h1M246 165.5h1M246 167.5h1M246 168.5h1M246 219.5h1M246 224.5h1M247 96.5h1M247 97.5h1M247 163.5h1M247 164.5h1M247 167.5h1M247 168.5h1M247 172.5h1M247 275.5h1M247 276.5h1M247 277.5h1M248 95.5h1M248 96.5h1M248 97.5h1M248 159.5h1M248 162.5h1M248 215.5h1M248 219.5h1M248 221.5h1M248 224.5h1M248 276.5h1M249 95.5h1M249 164.5h1M249 276.5h1M250 95.5h1M250 96.5h1M250 159.5h1M250 160.5h1M250 161.5h1M250 219.5h1M250 220.5h1M250 223.5h1M250 226.5h1M251 158.5h1M251 160.5h1M251 161.5h1M251 162.5h1M251 163.5h1M251 166.5h1M251 226.5h1M252 159.5h1M252 163.5h1M252 225.5h1M253 97.5h1M253 153.5h1M253 163.5h1M253 226.5h1M253 275.5h1M253 276.5h1M253 277.5h1M254 97.5h1M254 154.5h1M254 156.5h1M254 159.5h1M254 223.5h1M254 227.5h1M254 228.5h1M254 277.5h1M255 95.5h1M255 96.5h1M255 97.5h1M255 154.5h1M255 157.5h1M255 158.5h1M255 226.5h1M255 227.5h1M255 229.5h1M255 277.5h1M256 97.5h1M256 152.5h1M256 154.5h1M256 155.5h1M256 228.5h1M256 230.5h1M257 96.5h1M257 153.5h1M257 156.5h1M257 227.5h1M257 230.5h1M257 232.5h1M257 233.5h1M257 275.5h1M258 150.5h1M258 152.5h1M258 226.5h1M258 228.5h1M258 275.5h1M259 97.5h1M259 150.5h1M259 156.5h1M259 232.5h1M259 275.5h1M260 232.5h1M261 96.5h1M261 235.5h1M261 276.5h1M262 147.5h1M262 148.5h1M262 150.5h1M262 232.5h1M262 234.5h1M262 235.5h1M263 95.5h1M263 97.5h1M263 148.5h1M263 233.5h1M263 277.5h1M264 96.5h1M264 97.5h1M264 142.5h1M264 144.5h1M264 231.5h1M264 240.5h1M264 275.5h1M265 96.5h1M265 145.5h1M265 146.5h1M265 236.5h1M265 238.5h1M266 141.5h1M266 234.5h1M266 236.5h1M266 275.5h1M267 95.5h1M267 140.5h1M267 238.5h1M267 240.5h1M267 276.5h1M268 96.5h1M268 97.5h1M268 138.5h1M268 141.5h1M268 142.5h1M268 240.5h1M268 275.5h1M268 277.5h1M269 95.5h1M269 96.5h1M269 138.5h1M269 142.5h1M269 144.5h1M269 145.5h1M269 239.5h1M269 240.5h1M269 241.5h1M269 246.5h1M270 137.5h1M270 239.5h1M270 240.5h1M270 242.5h1M270 276.5h1M271 96.5h1M271 243.5h1M271 246.5h1M271 275.5h1M272 96.5h1M272 97.5h1M272 141.5h1M272 243.5h1M272 244.5h1M273 133.5h1M273 134.5h1M273 136.5h1M273 137.5h1M273 139.5h1M273 242.5h1M273 277.5h1M274 96.5h1M274 131.5h1M274 134.5h1M274 135.5h1M274 136.5h1M274 137.5h1M274 242.5h1M274 246.5h1M275 95.5h1M275 96.5h1M275 243.5h1M276 95.5h1M276 134.5h1M276 245.5h1M276 246.5h1M276 276.5h1M277 133.5h1M277 244.5h1M278 246.5h1M278 248.5h1M279 95.5h1M279 130.5h1M279 246.5h1M279 276.5h1M279 277.5h1M280 129.5h1M280 277.5h1M281 95.5h1M281 131.5h1M281 132.5h1M282 250.5h1M282 251.5h1M282 276.5h1M282 277.5h1M283 97.5h1M283 131.5h1M283 250.5h1M283 277.5h1M284 97.5h1M284 125.5h1M284 250.5h1M285 275.5h1M286 125.5h1M286 275.5h1M287 126.5h1M287 252.5h1M287 275.5h1M288 253.5h1M289 126.5h1M289 253.5h1M289 275.5h1M289 276.5h1M290 253.5h1M290 276.5h1M291 121.5h1M291 122.5h1M291 254.5h1M291 276.5h1M292 97.5h1M292 125.5h1M292 254.5h1M292 275.5h1M292 276.5h1M293 96.5h1M293 97.5h1M293 256.5h1M293 277.5h1M294 121.5h1M294 255.5h1M294 277.5h1M295 95.5h1M295 97.5h1M295 256.5h1M296 275.5h1M296 277.5h1M297 97.5h1M297 275.5h1M297 276.5h1M298 95.5h1M298 258.5h1M298 275.5h1M299 275.5h1M299 276.5h1M300 95.5h1M301 256.5h1M302 96.5h1M302 118.5h1M302 275.5h1M302 277.5h1M303 96.5h1M304 96.5h1M305 95.5h1M305 97.5h1M305 257.5h1M305 258.5h1M305 275.5h1M306 96.5h1M306 115.5h1M306 116.5h1M306 260.5h1M306 276.5h1M307 97.5h1M307 115.5h1M307 260.5h1M307 261.5h1M308 95.5h1M308 96.5h1M308 259.5h1M308 275.5h1M308 277.5h1M309 114.5h1M309 260.5h1M309 261.5h1M309 276.5h1M310 260.5h1M310 261.5h1M310 276.5h1M311 114.5h1M311 260.5h1M311 261.5h1M311 275.5h1M311 276.5h1M312 262.5h1M313 96.5h1M313 277.5h1M314 95.5h1M314 277.5h1M315 97.5h1M315 112.5h1M315 262.5h1M315 276.5h1M316 114.5h1M316 261.5h1M316 263.5h1M316 276.5h1M317 95.5h1M317 113.5h1M318 112.5h1M318 262.5h1M318 264.5h1M319 95.5h1M319 114.5h1M320 96.5h1M320 114.5h1M320 115.5h1M320 264.5h1M320 275.5h1M321 96.5h1M321 275.5h1M321 277.5h1M322 97.5h1M324 95.5h1M324 96.5h1M324 266.5h1M324 276.5h1M324 277.5h1M325 112.5h1M325 266.5h1M326 110.5h1M326 265.5h1M326 275.5h1M326 277.5h1M327 110.5h1M327 112.5h1M327 265.5h1M327 275.5h1M327 277.5h1M328 95.5h1M328 96.5h1M329 97.5h1M329 109.5h1M329 110.5h1M330 111.5h1M330 265.5h1M331 111.5h1M332 95.5h1M332 96.5h1M332 111.5h1M332 266.5h1M333 96.5h1M333 267.5h1M333 276.5h1M334 97.5h1M334 110.5h1M334 268.5h1M335 266.5h1M335 267.5h1M335 277.5h1M336 96.5h1M336 97.5h1M336 109.5h1M337 96.5h1M337 109.5h1M337 266.5h1M337 277.5h1M338 96.5h1M338 97.5h1M338 109.5h1M338 268.5h1M338 276.5h1M339 95.5h1M339 108.5h1M339 268.5h1M339 269.5h1M339 277.5h1M340 97.5h1M340 107.5h1M340 275.5h1M340 276.5h1M340 277.5h1M341 95.5h1M341 96.5h1M341 97.5h1M341 267.5h1M342 96.5h1M342 107.5h1M343 95.5h1M343 268.5h1M343 277.5h1M344 268.5h1M344 269.5h1M345 97.5h1M345 275.5h1M345 276.5h1M346 96.5h1M346 108.5h1M346 267.5h1M346 268.5h1M346 277.5h1M347 97.5h1M347 107.5h1M348 97.5h1M348 275.5h1M348 276.5h1M349 96.5h1M349 268.5h1M350 95.5h1M351 95.5h1M351 96.5h1M351 269.5h1M351 275.5h1M352 95.5h1M352 97.5h1M352 269.5h1M352 277.5h1M353 95.5h1M353 96.5h1M353 97.5h1M353 107.5h1M353 277.5h1M354 108.5h1M354 269.5h1M354 277.5h1M355 106.5h1M355 107.5h1M356 270.5h1M356 276.5h1M357 95.5h1M357 96.5h1M357 106.5h1M357 107.5h1M357 268.5h1M357 276.5h1M358 96.5h1M358 106.5h1M359 97.5h1M360 104.5h1M360 275.5h1M361 97.5h1M361 270.5h1M361 275.5h1M361 276.5h1M362 96.5h1M362 97.5h1M362 106.5h1M362 270.5h1M362 276.5h1M362 277.5h1M363 106.5h1M363 268.5h1M363 276.5h1M363 277.5h1M364 105.5h1M364 272.5h1M365 95.5h1M365 275.5h1M366 96.5h1M366 105.5h1M366 276.5h1M366 277.5h1M367 95.5h1M367 271.5h1M367 272.5h1M367 275.5h1M368 95.5h1M368 106.5h1M368 270.5h1M368 276.5h1M368 277.5h1M369 95.5h1M369 104.5h1M369 271.5h1M369 277.5h1M370 95.5h1M370 104.5h1M371 106.5h1M371 271.5h1M371 276.5h1M372 97.5h1M372 270.5h1M373 95.5h1M373 97.5h1M373 272.5h1M373 275.5h1M374 97.5h1M374 276.5h1M375 105.5h1M375 271.5h1M376 95.5h1M376 271.5h1M376 276.5h1M376 277.5h1M377 270.5h1M377 272.5h1M377 276.5h1M378 95.5h1M378 97.5h1M378 272.5h1M378 275.5h1M378 276.5h1M378 277.5h1M379 272.5h1M380 104.5h1M380 276.5h1M381 97.5h1M381 104.5h1M382 95.5h1M382 103.5h1M382 272.5h1M382 275.5h1M382 277.5h1M383 95.5h1M383 97.5h1M383 273.5h1M384 272.5h1M384 275.5h1M385 96.5h1M385 102.5h1M385 272.5h1M385 277.5h1M386 102.5h1M386 275.5h1M386 276.5h1M386 277.5h1M387 96.5h1M388 95.5h1M388 103.5h1M389 97.5h1M389 272.5h1M389 273.5h1M389 275.5h1M390 96.5h1M390 97.5h1M390 271.5h1M390 273.5h1M391 96.5h1M391 273.5h1M391 275.5h1M392 95.5h1M392 274.5h1M392 275.5h1M392 276.5h1M392 277.5h1M393 103.5h1M393 277.5h1M394 276.5h1M395 95.5h1M395 96.5h1M396 95.5h1M396 102.5h1M396 275.5h1M396 277.5h1M397 100.5h1M397 101.5h1M397 273.5h1M397 276.5h1M398 102.5h1M398 272.5h1M398 275.5h1M398 277.5h1M399 95.5h1M399 96.5h1M399 101.5h1M399 103.5h1M399 272.5h1M399 275.5h1M399 277.5h1M400 95.5h1M400 272.5h1M400 273.5h1M400 275.5h1M401 96.5h1M401 101.5h1M401 102.5h1M402 275.5h1M403 97.5h1M403 274.5h1M404 95.5h1M404 96.5h1M404 273.5h1M404 276.5h1M405 95.5h1M405 274.5h1M406 273.5h1M406 275.5h1M407 95.5h1M407 96.5h1M407 102.5h1M407 274.5h1M408 101.5h1M408 102.5h1M408 276.5h1M409 96.5h1M409 97.5h1M409 102.5h1M409 273.5h1M409 274.5h1M409 275.5h1M409 276.5h1M410 96.5h1M410 101.5h1M410 276.5h1M411 95.5h1M411 96.5h1M412 95.5h1M412 97.5h1M412 273.5h1M413 95.5h1M413 96.5h1M413 97.5h1M414 95.5h1M414 273.5h1M414 277.5h1M415 275.5h1M416 95.5h1M416 96.5h1M416 97.5h1M416 274.5h1M416 275.5h1M416 276.5h1M416 277.5h1M417 97.5h1M417 273.5h1M417 276.5h1M418 96.5h1M418 97.5h1M418 100.5h1M418 101.5h1M419 95.5h1M419 97.5h1M419 273.5h1M419 275.5h1M420 277.5h1M421 274.5h1M422 95.5h1M422 97.5h1M422 100.5h1M422 273.5h1M422 276.5h1M423 275.5h1M423 276.5h1M424 96.5h1M424 97.5h1M424 99.5h1M424 100.5h1M424 274.5h1M424 276.5h1M425 97.5h1M425 275.5h1M425 276.5h1M426 272.5h1M426 274.5h1M427 97.5h1M427 274.5h1M427 276.5h1M428 100.5h1M429 95.5h1M429 97.5h1M429 274.5h1M429 277.5h1M430 99.5h1M431 96.5h1M431 99.5h1M433 96.5h1M433 97.5h1M433 274.5h1M433 277.5h1M434 97.5h1M434 100.5h1M434 274.5h1M435 98.5h1M435 99.5h1M435 275.5h1M436 100.5h1M437 99.5h1M437 275.5h1M438 275.5h1M439 96.5h1M439 97.5h1M439 100.5h1M439 274.5h1M440 98.5h1M440 99.5h1M441 275.5h1M441 277.5h1M442 97.5h1M442 275.5h1M442 276.5h1M443 99.5h1M444 276.5h1M444 277.5h1M445 97.5h1M445 100.5h1M445 277.5h1M446 273.5h1M447 95.5h1M447 96.5h1M448 273.5h1M449 96.5h1M449 274.5h1M449 275.5h1M449 276.5h1M449 277.5h1M450 274.5h1M450 275.5h1M451 97.5h1M451 274.5h1M451 276.5h1M452 95.5h1M452 96.5h1M453 97.5h1M453 99.5h1M454 95.5h1M454 99.5h1M454 274.5h1M454 275.5h1M455 96.5h1M455 98.5h1M455 277.5h1M456 96.5h1M456 97.5h1M456 275.5h1M457 95.5h1M457 96.5h1M457 97.5h1M457 98.5h1M457 275.5h1M457 277.5h1M458 95.5h1M458 97.5h1M458 275.5h1M459 96.5h1M459 275.5h1M459 276.5h1M459 277.5h1M460 97.5h1M460 276.5h1M460 277.5h1M461 95.5h1M461 97.5h1M461 275.5h1M462 97.5h1M462 277.5h1M463 95.5h1M463 276.5h1M464 95.5h1M464 97.5h1M465 96.5h1M465 97.5h1M466 95.5h1M466 96.5h1M466 275.5h1M466 277.5h1M467 99.5h1M467 275.5h1M467 276.5h1M469 95.5h1M469 275.5h1M470 95.5h1M470 96.5h1M470 98.5h1M470 276.5h1M471 96.5h1M471 97.5h1M471 275.5h1M475 96.5h1M476 98.5h1M477 95.5h1M477 98.5h1M477 277.5h1M478 95.5h1M478 96.5h1M478 98.5h1M479 95.5h1M480 96.5h1M480 97.5h1M480 99.5h1M480 275.5h1M480 277.5h1M481 96.5h1M481 98.5h1M482 275.5h1M483 95.5h1M483 96.5h1M483 97.5h1M483 98.5h1M484 275.5h1M484 277.5h1M485 95.5h1M485 276.5h1M486 95.5h1M486 97.5h1M486 275.5h1M486 276.5h1M487 95.5h1M487 96.5h1M487 97.5h1M487 99.5h1M487 277.5h1M488 96.5h1M488 276.5h1M489 95.5h1M489 276.5h1M490 95.5h1M490 96.5h1M490 276.5h1M491 95.5h1M491 97.5h1M492 277.5h1M493 276.5h1M494 275.5h1M494 277.5h1M495 95.5h1M495 97.5h1M495 275.5h1M495 276.5h1M495 277.5h1M496 97.5h1M497 275.5h1M498 95.5h1M498 277.5h1M499 95.5h1M499 276.5h1M499 277.5h1" stroke="#22c822" stroke-width="1" fill="none"/><path d="M0 95.5h1M0 96.5h1M0 97.5h1M0 276.5h1M1 96.5h1M1 276.5h1M2 96.5h1M2 97.5h1M3 275.5h1M4 96.5h1M4 275.5h1M5 96.5h1M5 276.5h1M6 95.5h1M6 97.5h1M6 277.5h1M7 95.5h1M7 97.5h1M7 276.5h1M8 96.5h1M8 276.5h1M9 96.5h1M9 275.5h1M9 276.5h1M10 96.5h1M10 276.5h1M11 96.5h1M11 97.5h1M11 276.5h1M12 96.5h1M12 97.5h1M12 275.5h1M12 276.5h1M13 96.5h1M13 97.5h1M13 276.5h1M14 96.5h1M14 275.5h1M14 276.5h1M15 96.5h1M15 97.5h1M15 276.5h1M16 96.5h1M16 97.5h1M16 276.5h1M17 96.5h1M17 276.5h1M18 96.5h1M18 97.5h1M18 276.5h1M19 95.5h1M19 96.5h1M19 276.5h1M20 96.5h1M20 275.5h1M20 276.5h1M21 96.5h1M21 275.5h1M21 276.5h1M21 278.5h1M22 96.5h1M22 275.5h1M23 96.5h1M23 97.5h1M23 275.5h1M23 276.5h1M24 96.5h1M24 97.5h1M24 276.5h1M24 277.5h1M25 96.5h1M25 97.5h1M25 276.5h1M25 277.5h1M26 96.5h1M26 276.5h1M26 277.5h1M27 95.5h1M27 96.5h1M27 275.5h1M28 96.5h1M28 276.5h1M28 277.5h1M29 95.5h1M29 96.5h1M29 276.5h1M29 277.5h1M30 96.5h1M30 276.5h1M31 96.5h1M31 275.5h1M31 276.5h1M31 277.5h1M32 96.5h1M32 97.5h1M32 276.5h1M33 95.5h1M33 276.5h1M33 277.5h1M34 97.5h1M34 276.5h1M34 277.5h1M35 96.5h1M36 95.5h1M36 96.5h1M36 275.5h1M36 276.5h1M36 277.5h1M37 95.5h1M37 96.5h1M37 276.5h1M38 96.5h1M38 97.5h1M38 276.5h1M39 95.5h1M39 96.5h1M39 97.5h1M39 276.5h1M39 277.5h1M40 96.5h1M40 276.5h1M41 95.5h1M41 96.5h1M41 97.5h1M41 276.5h1M42 96.5h1M42 275.5h1M42 276.5h1M43 96.5h1M43 97.5h1M43 276.5h1M44 96.5h1M44 276.5h1M44 277.5h1M45 95.5h1M45 96.5h1M45 275.5h1M45 277.5h1M46 275.5h1M46 276.5h1M47 96.5h1M47 276.5h1M48 96.5h1M48 275.5h1M48 276.5h1M48 277.5h1M49 95.5h1M49 96.5h1M49 97.5h1M49 275.5h1M49 276.5h1M50 95.5h1M50 96.5h1M50 276.5h1M51 96.5h1M51 276.5h1M52 276.5h1M53 276.5h1M53 277.5h1M54 95.5h1M54 96.5h1M54 275.5h1M55 275.5h1M56 96.5h1M57 95.5h1M57 96.5h1M57 97.5h1M57 275.5h1M57 276.5h1M58 95.5h1M58 96.5h1M58 97.5h1M58 276.5h1M59 96.5h1M59 98.5h1M59 276.5h1M60 96.5h1M61 96.5h1M61 97.5h1M61 276.5h1M62 95.5h1M62 96.5h1M62 276.5h1M63 96.5h1M63 276.5h1M63 277.5h1M64 96.5h1M64 276.5h1M65 96.5h1M65 275.5h1M65 276.5h1M65 277.5h1M66 96.5h1M66 276.5h1M67 96.5h1M67 276.5h1M68 96.5h1M68 275.5h1M68 276.5h1M69 96.5h1M69 97.5h1M69 277.5h1M70 95.5h1M70 96.5h1M70 276.5h1M71 96.5h1M71 97.5h1M71 276.5h1M72 97.5h1M72 276.5h1M73 96.5h1M73 97.5h1M73 277.5h1M74 95.5h1M74 96.5h1M74 97.5h1M74 275.5h1M74 276.5h1M75 95.5h1M75 96.5h1M75 97.5h1M75 276.5h1M76 95.5h1M76 96.5h1M76 276.5h1M77 95.5h1M77 96.5h1M77 275.5h1M78 96.5h1M78 98.5h1M78 276.5h1M78 277.5h1M79 96.5h1M79 276.5h1M79 277.5h1M80 95.5h1M80 96.5h1M80 97.5h1M80 276.5h1M80 277.5h1M81 95.5h1M81 97.5h1M81 275.5h1M82 95.5h1M82 96.5h1M82 276.5h1M83 276.5h1M84 96.5h1M84 97.5h1M84 276.5h1M85 95.5h1M85 96.5h1M85 97.5h1M85 276.5h1M85 277.5h1M86 96.5h1M86 97.5h1M86 275.5h1M86 276.5h1M86 277.5h1M87 95.5h1M87 96.5h1M87 277.5h1M88 95.5h1M88 96.5h1M88 276.5h1M89 95.5h1M89 96.5h1M89 276.5h1M90 96.5h1M90 274.5h1M90 276.5h1M91 95.5h1M91 97.5h1M91 276.5h1M92 95.5h1M92 96.5h1M92 275.5h1M92 276.5h1M93 95.5h1M93 275.5h1M93 276.5h1M93 277.5h1M94 96.5h1M94 97.5h1M94 275.5h1M94 276.5h1M95 96.5h1M95 97.5h1M95 276.5h1M96 97.5h1M96 276.5h1M96 277.5h1M97 95.5h1M97 96.5h1M97 276.5h1M97 277.5h1M98 96.5h1M98 97.5h1M98 276.5h1M99 97.5h1M99 276.5h1M100 96.5h1M100 97.5h1M100 275.5h1M100 276.5h1M101 95.5h1M101 96.5h1M101 97.5h1M101 275.5h1M102 96.5h1M102 276.5h1M103 95.5h1M103 96.5h1M104 96.5h1M104 275.5h1M105 96.5h1M105 276.5h1M105 278.5h1M106 96.5h1M106 276.5h1M106 277.5h1M107 96.5h1M107 275.5h1M107 276.5h1M107 277.5h1M108 96.5h1M108 276.5h1M109 96.5h1M109 276.5h1M110 96.5h1M110 97.5h1M111 276.5h1M112 276.5h1M113 96.5h1M113 97.5h1M113 276.5h1M114 97.5h1M114 276.5h1M114 277.5h1M115 96.5h1M115 97.5h1M115 276.5h1M115 277.5h1M116 96.5h1M116 275.5h1M117 96.5h1M118 96.5h1M118 276.5h1M119 96.5h1M119 276.5h1M120 96.5h1M120 275.5h1M120 276.5h1M121 96.5h1M121 276.5h1M122 95.5h1M122 96.5h1M122 275.5h1M123 96.5h1M123 97.5h1M123 275.5h1M123 276.5h1M124 96.5h1M124 276.5h1M125 97.5h1M125 276.5h1M125 277.5h1M126 96.5h1M126 275.5h1M126 276.5h1M127 96.5h1M127 276.5h1M128 96.5h1M128 97.5h1M128 275.5h1M128 276.5h1M129 96.5h1M129 275.5h1M129 276.5h1M130 96.5h1M130 97.5h1M130 276.5h1M130 277.5h1M131 95.5h1M131 96.5h1M131 274.5h1M131 276.5h1M132 97.5h1M132 276.5h1M133 96.5h1M133 276.5h1M133 277.5h1M134 96.5h1M134 276.5h1M135 96.5h1M135 97.5h1M135 276.5h1M136 96.5h1M136 97.5h1M136 275.5h1M136 276.5h1M137 96.5h1M137 97.5h1M137 275.5h1M137 276.5h1M138 96.5h1M138 277.5h1M139 95.5h1M139 96.5h1M139 97.5h1M139 276.5h1M140 96.5h1M140 98.5h1M140 99.5h1M140 275.5h1M140 276.5h1M140 277.5h1M141 97.5h1M141 275.5h1M142 96.5h1M142 99.5h1M142 275.5h1M142 276.5h1M143 96.5h1M143 97.5h1M143 276.5h1M143 277.5h1M144 96.5h1M144 276.5h1M145 95.5h1M145 96.5h1M145 99.5h1M145 275.5h1M146 96.5h1M146 276.5h1M147 96.5h1M147 273.5h1M147 276.5h1M147 277.5h1M148 96.5h1M148 273.5h1M148 274.5h1M149 96.5h1M149 100.5h1M149 275.5h1M149 276.5h1M150 96.5h1M150 100.5h1M150 274.5h1M150 275.5h1M150 276.5h1M151 96.5h1M151 100.5h1M151 276.5h1M152 95.5h1M152 96.5h1M152 99.5h1M153 95.5h1M153 96.5h1M153 274.5h1M153 275.5h1M154 96.5h1M154 101.5h1M154 274.5h1M154 276.5h1M155 96.5h1M155 100.5h1M155 273.5h1M155 276.5h1M156 96.5h1M156 102.5h1M156 271.5h1M156 276.5h1M157 95.5h1M157 96.5h1M157 102.5h1M157 273.5h1M158 96.5h1M158 101.5h1M158 271.5h1M158 276.5h1M159 96.5h1M159 97.5h1M159 103.5h1M159 273.5h1M160 96.5h1M160 102.5h1M160 103.5h1M160 271.5h1M160 275.5h1M160 276.5h1M161 96.5h1M161 107.5h1M162 95.5h1M162 96.5h1M162 97.5h1M162 103.5h1M162 271.5h1M162 275.5h1M162 276.5h1M163 96.5h1M163 104.5h1M163 276.5h1M164 96.5h1M164 271.5h1M164 276.5h1M165 95.5h1M165 96.5h1M165 103.5h1M165 106.5h1M165 276.5h1M166 104.5h1M166 276.5h1M167 96.5h1M167 105.5h1M168 96.5h1M168 276.5h1M169 97.5h1M169 269.5h1M169 276.5h1M170 96.5h1M170 97.5h1M170 269.5h1M170 275.5h1M170 276.5h1M171 96.5h1M171 106.5h1M171 268.5h1M171 276.5h1M172 95.5h1M172 96.5h1M172 110.5h1M172 267.5h1M173 276.5h1M173 277.5h1M174 97.5h1M174 268.5h1M174 276.5h1M175 96.5h1M175 111.5h1M175 276.5h1M176 96.5h1M176 113.5h1M176 266.5h1M176 276.5h1M177 96.5h1M177 267.5h1M178 96.5h1M179 96.5h1M179 114.5h1M180 96.5h1M180 97.5h1M180 263.5h1M181 95.5h1M181 115.5h1M181 116.5h1M181 118.5h1M181 276.5h1M182 96.5h1M182 114.5h1M182 261.5h1M182 277.5h1M183 96.5h1M183 117.5h1M183 263.5h1M183 265.5h1M183 276.5h1M184 96.5h1M184 117.5h1M184 261.5h1M184 276.5h1M185 96.5h1M185 120.5h1M185 261.5h1M185 263.5h1M185 275.5h1M185 276.5h1M186 95.5h1M186 96.5h1M186 122.5h1M186 262.5h1M186 276.5h1M187 96.5h1M187 257.5h1M187 260.5h1M187 275.5h1M187 276.5h1M187 277.5h1M188 96.5h1M188 277.5h1M189 96.5h1M189 97.5h1M189 120.5h1M189 128.5h1M189 257.5h1M189 258.5h1M189 275.5h1M189 276.5h1M190 96.5h1M190 122.5h1M190 124.5h1M190 254.5h1M190 256.5h1M190 257.5h1M190 258.5h1M190 276.5h1M191 96.5h1M191 97.5h1M191 123.5h1M191 124.5h1M191 127.5h1M191 258.5h1M191 276.5h1M192 96.5h1M192 97.5h1M192 125.5h1M192 127.5h1M192 255.5h1M192 276.5h1M193 125.5h1M193 126.5h1M193 130.5h1M194 96.5h1M194 126.5h1M194 127.5h1M194 130.5h1M194 254.5h1M194 257.5h1M194 276.5h1M195 96.5h1M195 97.5h1M195 252.5h1M195 253.5h1M195 255.5h1M195 256.5h1M195 275.5h1M196 96.5h1M196 253.5h1M196 254.5h1M196 276.5h1M197 96.5h1M197 131.5h1M197 134.5h1M197 253.5h1M197 276.5h1M198 96.5h1M198 129.5h1M198 131.5h1M198 252.5h1M199 96.5h1M199 97.5h1M199 131.5h1M199 247.5h1M199 248.5h1M199 249.5h1M200 96.5h1M200 135.5h1M200 275.5h1M201 96.5h1M201 140.5h1M201 244.5h1M201 276.5h1M202 95.5h1M202 96.5h1M202 138.5h1M202 139.5h1M202 140.5h1M202 142.5h1M202 143.5h1M202 144.5h1M202 247.5h1M202 249.5h1M203 96.5h1M203 136.5h1M203 140.5h1M203 146.5h1M203 247.5h1M204 96.5h1M204 139.5h1M204 141.5h1M204 276.5h1M205 95.5h1M205 96.5h1M205 141.5h1M205 143.5h1M205 146.5h1M205 148.5h1M205 239.5h1M205 242.5h1M205 276.5h1M206 95.5h1M206 144.5h1M206 146.5h1M206 150.5h1M206 236.5h1M206 241.5h1M206 242.5h1M206 276.5h1M207 95.5h1M207 96.5h1M207 152.5h1M207 276.5h1M208 96.5h1M208 149.5h1M208 237.5h1M208 245.5h1M209 148.5h1M209 231.5h1M209 237.5h1M209 276.5h1M209 277.5h1M210 96.5h1M210 150.5h1M210 152.5h1M210 238.5h1M210 276.5h1M211 96.5h1M211 150.5h1M211 151.5h1M211 223.5h1M211 231.5h1M211 276.5h1M212 95.5h1M212 96.5h1M212 155.5h1M212 156.5h1M212 159.5h1M212 230.5h1M213 96.5h1M213 159.5h1M213 161.5h1M213 227.5h1M213 229.5h1M213 275.5h1M213 276.5h1M214 95.5h1M214 96.5h1M214 162.5h1M214 165.5h1M214 227.5h1M214 276.5h1M215 95.5h1M215 96.5h1M215 156.5h1M215 159.5h1M215 223.5h1M216 96.5h1M216 161.5h1M216 163.5h1M216 220.5h1M216 222.5h1M216 276.5h1M217 96.5h1M217 156.5h1M217 164.5h1M217 217.5h1M217 276.5h1M218 96.5h1M218 163.5h1M218 164.5h1M218 166.5h1M218 167.5h1M218 175.5h1M218 212.5h1M219 277.5h1M220 96.5h1M220 162.5h1M220 165.5h1M220 169.5h1M220 214.5h1M221 95.5h1M221 96.5h1M221 171.5h1M221 177.5h1M221 214.5h1M221 217.5h1M222 96.5h1M222 174.5h1M222 200.5h1M222 209.5h1M222 276.5h1M223 97.5h1M223 173.5h1M223 175.5h1M224 96.5h1M224 97.5h1M224 180.5h1M225 177.5h1M225 201.5h1M226 96.5h1M226 175.5h1M226 176.5h1M226 177.5h1M226 206.5h1M227 97.5h1M227 181.5h1M227 188.5h1M227 206.5h1M227 276.5h1M228 96.5h1M228 97.5h1M228 177.5h1M228 200.5h1M228 276.5h1M228 277.5h1M229 96.5h1M229 177.5h1M229 184.5h1M229 196.5h1M229 199.5h1M230 95.5h1M230 96.5h1M230 190.5h1M230 196.5h1M230 197.5h1M230 276.5h1M231 96.5h1M231 191.5h1M231 195.5h1M231 198.5h1M231 199.5h1M231 276.5h1M232 96.5h1M232 97.5h1M232 188.5h1M232 193.5h1M232 197.5h1M233 185.5h1M233 187.5h1M233 188.5h1M233 192.5h1M233 195.5h1M233 276.5h1M234 96.5h1M234 184.5h1M234 276.5h1M235 185.5h1M235 194.5h1M235 202.5h1M235 276.5h1M236 176.5h1M236 183.5h1M236 188.5h1M236 200.5h1M236 206.5h1M236 276.5h1M237 96.5h1M237 188.5h1M237 198.5h1M237 276.5h1M238 96.5h1M238 182.5h1M238 186.5h1M238 187.5h1M238 200.5h1M238 212.5h1M238 276.5h1M239 183.5h1M239 198.5h1M239 276.5h1M240 174.5h1M240 276.5h1M241 97.5h1M241 175.5h1M241 209.5h1M241 212.5h1M242 174.5h1M242 214.5h1M243 95.5h1M243 96.5h1M243 166.5h1M243 171.5h1M243 174.5h1M243 219.5h1M244 96.5h1M244 173.5h1M244 215.5h1M244 216.5h1M244 218.5h1M244 276.5h1M245 163.5h1M245 169.5h1M245 216.5h1M246 95.5h1M246 96.5h1M246 97.5h1M246 217.5h1M246 218.5h1M246 222.5h1M246 275.5h1M246 276.5h1M247 215.5h1M247 217.5h1M248 164.5h1M248 220.5h1M249 96.5h1M249 163.5h1M249 173.5h1M249 224.5h1M249 226.5h1M249 277.5h1M250 162.5h1M250 276.5h1M251 95.5h1M251 96.5h1M251 97.5h1M251 223.5h1M251 224.5h1M251 276.5h1M252 96.5h1M252 156.5h1M252 158.5h1M252 226.5h1M252 227.5h1M252 276.5h1M253 95.5h1M253 96.5h1M253 154.5h1M253 156.5h1M253 165.5h1M254 96.5h1M254 157.5h1M254 226.5h1M254 275.5h1M254 276.5h1M255 155.5h1M255 156.5h1M255 225.5h1M255 276.5h1M256 96.5h1M256 231.5h1M256 275.5h1M256 276.5h1M257 97.5h1M257 152.5h1M257 234.5h1M257 276.5h1M258 96.5h1M258 155.5h1M258 230.5h1M258 276.5h1M258 277.5h1M259 96.5h1M259 153.5h1M259 229.5h1M259 230.5h1M259 231.5h1M259 276.5h1M259 277.5h1M260 96.5h1M260 149.5h1M260 150.5h1M260 229.5h1M260 231.5h1M260 235.5h1M260 236.5h1M260 276.5h1M261 97.5h1M261 148.5h1M261 155.5h1M261 236.5h1M261 275.5h1M262 96.5h1M262 233.5h1M262 276.5h1M263 96.5h1M263 145.5h1M263 151.5h1M263 234.5h1M263 236.5h1M263 276.5h1M264 141.5h1M264 145.5h1M264 237.5h1M264 276.5h1M264 277.5h1M265 143.5h1M265 147.5h1M265 235.5h1M265 276.5h1M266 96.5h1M266 144.5h1M266 237.5h1M266 239.5h1M266 276.5h1M267 96.5h1M267 97.5h1M267 143.5h1M267 241.5h1M267 243.5h1M268 139.5h1M268 276.5h1M269 97.5h1M269 141.5h1M269 143.5h1M269 276.5h1M269 277.5h1M270 95.5h1M270 96.5h1M270 140.5h1M270 142.5h1M270 275.5h1M271 97.5h1M271 136.5h1M271 241.5h1M271 242.5h1M271 276.5h1M272 137.5h1M272 139.5h1M272 239.5h1M272 240.5h1M272 245.5h1M272 246.5h1M272 276.5h1M273 96.5h1M273 138.5h1M273 241.5h1M273 244.5h1M273 276.5h1M274 241.5h1M274 243.5h1M274 245.5h1M274 275.5h1M274 276.5h1M275 134.5h1M275 135.5h1M275 242.5h1M275 247.5h1M275 276.5h1M276 96.5h1M276 135.5h1M276 136.5h1M276 247.5h1M276 248.5h1M277 96.5h1M277 135.5h1M277 247.5h1M277 276.5h1M277 277.5h1M278 96.5h1M278 97.5h1M278 132.5h1M278 134.5h1M278 136.5h1M278 275.5h1M278 276.5h1M279 96.5h1M279 132.5h1M279 133.5h1M279 248.5h1M280 96.5h1M280 133.5h1M280 248.5h1M280 275.5h1M280 276.5h1M281 96.5h1M281 249.5h1M281 276.5h1M282 95.5h1M282 96.5h1M282 128.5h1M283 96.5h1M283 126.5h1M283 248.5h1M283 276.5h1M284 96.5h1M284 124.5h1M284 251.5h1M284 275.5h1M284 276.5h1M285 96.5h1M285 125.5h1M285 127.5h1M285 252.5h1M285 276.5h1M286 96.5h1M286 97.5h1M286 127.5h1M286 252.5h1M286 276.5h1M287 96.5h1M287 276.5h1M288 96.5h1M288 125.5h1M288 254.5h1M288 276.5h1M288 277.5h1M289 96.5h1M289 122.5h1M290 95.5h1M290 96.5h1M290 123.5h1M290 254.5h1M291 96.5h1M291 256.5h1M291 277.5h1M292 96.5h1M292 123.5h1M292 277.5h1M293 122.5h1M293 252.5h1M293 276.5h1M294 96.5h1M294 256.5h1M294 276.5h1M295 96.5h1M295 122.5h1M295 255.5h1M295 276.5h1M296 95.5h1M296 96.5h1M296 121.5h1M296 257.5h1M296 276.5h1M297 96.5h1M297 120.5h1M297 255.5h1M297 256.5h1M298 96.5h1M298 276.5h1M299 96.5h1M299 118.5h1M299 119.5h1M299 257.5h1M300 96.5h1M300 118.5h1M300 257.5h1M300 258.5h1M300 276.5h1M301 96.5h1M301 118.5h1M301 257.5h1M301 276.5h1M302 257.5h1M302 276.5h1M303 118.5h1M303 258.5h1M303 276.5h1M304 95.5h1M304 117.5h1M304 260.5h1M304 276.5h1M305 96.5h1M305 116.5h1M305 117.5h1M305 276.5h1M305 277.5h1M307 95.5h1M307 96.5h1M307 276.5h1M308 117.5h1M308 260.5h1M308 276.5h1M309 96.5h1M309 277.5h1M310 96.5h1M310 97.5h1M310 114.5h1M310 115.5h1M311 96.5h1M311 277.5h1M312 96.5h1M312 115.5h1M312 116.5h1M312 276.5h1M313 114.5h1M313 261.5h1M313 276.5h1M314 96.5h1M314 97.5h1M314 113.5h1M314 114.5h1M314 261.5h1M314 262.5h1M314 275.5h1M314 276.5h1M315 96.5h1M315 114.5h1M316 96.5h1M316 112.5h1M316 275.5h1M317 96.5h1M317 97.5h1M317 261.5h1M317 276.5h1M317 277.5h1M318 96.5h1M318 97.5h1M318 276.5h1M319 96.5h1M319 113.5h1M319 262.5h1M319 276.5h1M319 277.5h1M320 112.5h1M320 263.5h1M320 276.5h1M320 277.5h1M321 112.5h1M321 113.5h1M321 276.5h1M322 96.5h1M322 276.5h1M323 96.5h1M323 97.5h1M323 111.5h1M323 112.5h1M323 263.5h1M323 276.5h1M323 277.5h1M324 113.5h1M324 265.5h1M325 96.5h1M325 97.5h1M325 111.5h1M325 275.5h1M325 276.5h1M325 277.5h1M326 95.5h1M326 96.5h1M326 97.5h1M326 276.5h1M327 96.5h1M327 97.5h1M327 264.5h1M327 276.5h1M328 265.5h1M328 275.5h1M328 276.5h1M329 96.5h1M329 265.5h1M329 276.5h1M330 95.5h1M330 96.5h1M330 108.5h1M330 266.5h1M330 276.5h1M331 96.5h1M331 97.5h1M331 110.5h1M331 267.5h1M331 275.5h1M331 276.5h1M332 110.5h1M332 267.5h1M332 276.5h1M332 277.5h1M333 109.5h1M333 277.5h1M334 96.5h1M334 265.5h1M334 267.5h1M334 276.5h1M334 277.5h1M335 96.5h1M335 97.5h1M335 109.5h1M335 276.5h1M336 266.5h1M336 276.5h1M337 267.5h1M337 276.5h1M338 277.5h1M339 96.5h1M339 109.5h1M339 267.5h1M339 276.5h1M340 96.5h1M340 108.5h1M340 267.5h1M341 108.5h1M341 268.5h1M341 275.5h1M341 276.5h1M342 269.5h1M342 276.5h1M343 96.5h1M343 107.5h1M343 108.5h1M343 276.5h1M344 96.5h1M344 97.5h1M344 106.5h1M344 107.5h1M344 109.5h1M344 267.5h1M344 276.5h1M345 95.5h1M345 96.5h1M345 107.5h1M345 108.5h1M345 267.5h1M346 97.5h1M346 107.5h1M346 275.5h1M346 276.5h1M347 96.5h1M347 108.5h1M347 276.5h1M347 277.5h1M348 96.5h1M348 106.5h1M348 108.5h1M348 268.5h1M348 269.5h1M349 107.5h1M349 108.5h1M349 276.5h1M350 96.5h1M350 107.5h1M350 276.5h1M351 106.5h1M351 276.5h1M351 277.5h1M352 96.5h1M352 275.5h1M352 276.5h1M353 106.5h1M353 268.5h1M353 276.5h1M354 95.5h1M354 96.5h1M354 105.5h1M354 276.5h1M355 95.5h1M355 96.5h1M355 97.5h1M355 269.5h1M355 275.5h1M355 276.5h1M356 96.5h1M356 106.5h1M356 269.5h1M358 97.5h1M358 107.5h1M358 270.5h1M358 276.5h1M359 95.5h1M359 96.5h1M359 105.5h1M359 106.5h1M359 269.5h1M359 270.5h1M359 276.5h1M359 277.5h1M360 95.5h1M360 96.5h1M360 270.5h1M360 276.5h1M361 96.5h1M361 105.5h1M362 271.5h1M363 96.5h1M363 97.5h1M363 105.5h1M363 271.5h1M363 275.5h1M364 95.5h1M364 96.5h1M364 104.5h1M364 271.5h1M364 276.5h1M365 96.5h1M365 104.5h1M365 270.5h1M365 276.5h1M367 96.5h1M367 97.5h1M367 104.5h1M367 276.5h1M368 96.5h1M368 105.5h1M369 96.5h1M369 105.5h1M369 270.5h1M369 276.5h1M370 96.5h1M370 105.5h1M370 276.5h1M371 96.5h1M371 270.5h1M372 96.5h1M372 104.5h1M372 105.5h1M372 271.5h1M372 276.5h1M373 96.5h1M373 104.5h1M373 271.5h1M373 276.5h1M374 96.5h1M374 103.5h1M374 104.5h1M374 271.5h1M374 272.5h1M375 96.5h1M375 97.5h1M375 103.5h1M375 272.5h1M375 276.5h1M376 96.5h1M376 97.5h1M377 95.5h1M377 96.5h1M378 96.5h1M378 103.5h1M379 96.5h1M379 103.5h1M379 276.5h1M380 96.5h1M380 102.5h1M380 271.5h1M380 275.5h1M381 96.5h1M381 102.5h1M381 272.5h1M381 275.5h1M381 276.5h1M382 96.5h1M382 276.5h1M383 96.5h1M383 104.5h1M383 276.5h1M384 96.5h1M384 97.5h1M384 103.5h1M384 104.5h1M384 273.5h1M384 276.5h1M385 103.5h1M385 273.5h1M385 275.5h1M385 276.5h1M386 96.5h1M386 272.5h1M387 95.5h1M387 103.5h1M387 273.5h1M387 275.5h1M387 276.5h1M388 96.5h1M388 102.5h1M388 273.5h1M388 275.5h1M388 276.5h1M388 277.5h1M389 96.5h1M389 102.5h1M389 103.5h1M389 276.5h1M390 103.5h1M390 276.5h1M391 95.5h1M391 102.5h1M391 103.5h1M391 276.5h1M392 96.5h1M392 102.5h1M393 96.5h1M393 272.5h1M393 275.5h1M393 276.5h1M394 95.5h1M394 96.5h1M394 101.5h1M394 102.5h1M394 271.5h1M394 273.5h1M395 97.5h1M395 102.5h1M395 103.5h1M395 273.5h1M395 276.5h1M396 96.5h1M396 97.5h1M396 103.5h1M396 273.5h1M396 276.5h1M397 96.5h1M398 96.5h1M398 97.5h1M398 273.5h1M398 276.5h1M399 97.5h1M399 102.5h1M399 274.5h1M399 276.5h1M400 96.5h1M400 102.5h1M400 276.5h1M401 97.5h1M401 273.5h1M401 276.5h1M401 277.5h1M402 96.5h1M402 97.5h1M402 101.5h1M402 273.5h1M402 276.5h1M403 96.5h1M403 101.5h1M403 273.5h1M403 276.5h1M404 101.5h1M404 102.5h1M404 274.5h1M405 96.5h1M405 101.5h1M405 276.5h1M406 96.5h1M406 102.5h1M406 276.5h1M406 277.5h1M407 97.5h1M407 100.5h1M407 273.5h1M407 276.5h1M408 96.5h1M408 275.5h1M409 95.5h1M409 101.5h1M410 95.5h1M410 102.5h1M410 273.5h1M410 275.5h1M411 100.5h1M411 101.5h1M411 273.5h1M411 275.5h1M411 276.5h1M412 96.5h1M412 101.5h1M412 275.5h1M412 276.5h1M413 100.5h1M413 102.5h1M413 276.5h1M414 96.5h1M414 97.5h1M414 100.5h1M414 274.5h1M414 276.5h1M415 96.5h1M415 99.5h1M415 101.5h1M415 273.5h1M415 276.5h1M416 101.5h1M416 102.5h1M417 96.5h1M417 100.5h1M417 101.5h1M417 275.5h1M418 273.5h1M418 275.5h1M418 276.5h1M418 277.5h1M419 96.5h1M419 100.5h1M419 101.5h1M419 274.5h1M419 276.5h1M420 95.5h1M420 96.5h1M420 97.5h1M420 100.5h1M420 275.5h1M420 276.5h1M421 95.5h1M421 96.5h1M421 101.5h1M421 275.5h1M421 276.5h1M422 96.5h1M422 275.5h1M422 277.5h1M423 96.5h1M423 100.5h1M423 274.5h1M425 95.5h1M425 96.5h1M425 100.5h1M426 96.5h1M426 100.5h1M426 276.5h1M426 277.5h1M427 96.5h1M427 100.5h1M428 96.5h1M428 99.5h1M428 274.5h1M428 276.5h1M429 96.5h1M429 99.5h1M429 100.5h1M429 275.5h1M429 276.5h1M430 95.5h1M430 96.5h1M430 274.5h1M430 275.5h1M430 276.5h1M431 276.5h1M432 96.5h1M432 275.5h1M432 276.5h1M433 99.5h1M433 276.5h1M434 96.5h1M434 99.5h1M434 275.5h1M434 276.5h1M435 96.5h1M435 276.5h1M436 96.5h1M436 98.5h1M436 276.5h1M437 96.5h1M437 276.5h1M437 277.5h1M438 96.5h1M438 100.5h1M438 276.5h1M439 95.5h1M439 98.5h1M439 99.5h1M439 276.5h1M440 96.5h1M440 97.5h1M440 275.5h1M440 276.5h1M441 96.5h1M441 99.5h1M441 276.5h1M442 96.5h1M442 99.5h1M443 95.5h1M443 96.5h1M443 275.5h1M443 276.5h1M443 277.5h1M444 95.5h1M444 96.5h1M444 98.5h1M444 100.5h1M445 96.5h1M445 99.5h1M445 275.5h1M445 276.5h1M446 95.5h1M446 96.5h1M446 99.5h1M446 275.5h1M446 276.5h1M447 276.5h1M448 95.5h1M448 96.5h1M448 97.5h1M448 98.5h1M448 275.5h1M448 276.5h1M448 277.5h1M449 97.5h1M449 98.5h1M450 96.5h1M450 98.5h1M450 276.5h1M451 96.5h1M451 99.5h1M451 275.5h1M452 99.5h1M452 276.5h1M453 95.5h1M453 96.5h1M453 98.5h1M453 276.5h1M454 96.5h1M454 97.5h1M454 98.5h1M454 276.5h1M455 274.5h1M455 275.5h1M455 276.5h1M456 98.5h1M456 276.5h1M457 276.5h1M458 96.5h1M458 98.5h1M458 276.5h1M459 97.5h1M459 98.5h1M459 99.5h1M460 96.5h1M460 99.5h1M460 275.5h1M461 96.5h1M461 274.5h1M461 276.5h1M462 96.5h1M462 98.5h1M462 276.5h1M463 96.5h1M463 97.5h1M463 98.5h1M463 275.5h1M464 96.5h1M464 99.5h1M464 276.5h1M465 98.5h1M465 275.5h1M465 276.5h1M466 97.5h1M466 98.5h1M466 276.5h1M467 96.5h1M468 96.5h1M468 97.5h1M468 275.5h1M468 276.5h1M469 96.5h1M469 98.5h1M469 276.5h1M469 277.5h1M470 97.5h1M470 277.5h1M471 276.5h1M472 96.5h1M472 98.5h1M472 276.5h1M472 277.5h1M473 96.5h1M473 97.5h1M473 100.5h1M473 275.5h1M473 276.5h1M473 277.5h1M474 96.5h1M474 97.5h1M474 275.5h1M474 276.5h1M475 95.5h1M475 276.5h1M476 96.5h1M476 97.5h1M476 275.5h1M476 276.5h1M477 96.5h1M477 276.5h1M478 275.5h1M478 276.5h1M479 96.5h1M479 97.5h1M479 276.5h1M479 277.5h1M480 98.5h1M480 276.5h1M481 97.5h1M481 276.5h1M482 95.5h1M482 96.5h1M482 276.5h1M483 275.5h1M483 276.5h1M484 96.5h1M484 97.5h1M484 98.5h1M484 276.5h1M485 96.5h1M485 97.5h1M485 275.5h1M486 96.5h1M487 275.5h1M487 276.5h1M488 97.5h1M488 275.5h1M489 96.5h1M489 97.5h1M489 275.5h1M490 97.5h1M490 275.5h1M491 96.5h1M491 276.5h1M492 96.5h1M492 275.5h1M492 276.5h1M493 96.5h1M493 97.5h1M493 98.5h1M493 275.5h1M494 96.5h1M494 97.5h1M494 276.5h1M495 96.5h1M496 96.5h1M496 276.5h1M496 277.5h1M497 96.5h1M497 97.5h1M497 276.5h1M497 277.5h1M498 96.5h1M498 97.5h1M498 275.5h1M498 276.5h1M499 96.5h1M499 97.5h1M499 275.5h1" stroke="#3cff3c" stroke-width="1" fill="none"/></svg>
<svg style="left:25px;top:79px" width="30" height="370" viewBox="0 0 30 370" ><path d="M0 185.5H10" stroke="#20f020" stroke-width="2" fill="none"/><path d="M9.2 185V194.5M3 194.6H16.2" stroke="#20f020" stroke-width="1.9" fill="none"/><path d="M5.2 195l-2.8 5.6M8.8 195l-2.8 5.6M12.4 195l-2.8 5.6M16 195l-2.8 5.6" stroke="#20f020" stroke-width="1.7" fill="none"/></svg>
<div style="left:24px;top:77px;width:504px;height:1px;background:#e6e6e6;"></div>
<div style="left:24px;top:78px;width:1px;height:373px;background:#d8d8d8;"></div>
<span style="left:26.3px;top:81.69px;font-size:11px;line-height:11px;color:#44f044;transform:scaleX(0.977);">250.0mV</span>
<span style="left:26px;top:435.69px;font-size:11px;line-height:11px;color:#44f044;transform:scaleX(0.975);">-250.0mV</span>
<span style="left:466.5px;top:435.69px;font-size:11px;line-height:11px;color:#44f044;">200.0ps/div</span>
<span style="left:303.3px;top:270.05px;font-size:14px;line-height:14px;color:#38f038;font-weight:bold;transform:scaleX(0.938);">C5</span>
<div style="left:0px;top:257px;width:18px;height:14px;background:#fff;"></div>
<div style="left:0px;top:271px;width:18px;height:1px;background:#404040;"></div>
<span style="left:2.5px;top:258.39px;font-size:11px;line-height:11px;color:#000;transform:scaleX(0.960);">C5</span>
<svg style="left:17px;top:256px" width="8" height="16" viewBox="0 0 8 16" ><path d="M1 1.5L7 8L1 14.5Z" fill="#20e020"/></svg>
<span style="left:6px;top:2.94px;font-size:12px;line-height:12px;color:#000;transform:scaleX(0.905);">File</span>
<span style="left:35px;top:2.94px;font-size:12px;line-height:12px;color:#000;transform:scaleX(0.943);">Edit</span>
<span style="left:64px;top:2.94px;font-size:12px;line-height:12px;color:#000;transform:scaleX(0.903);">View</span>
<span style="left:99px;top:2.94px;font-size:12px;line-height:12px;color:#000;transform:scaleX(0.925);">Setup</span>
<span style="left:139px;top:2.94px;font-size:12px;line-height:12px;color:#000;transform:scaleX(0.970);">Utilities</span>
<span style="left:184px;top:2.94px;font-size:12px;line-height:12px;color:#000;transform:scaleX(0.912);">Applications</span>
<span style="left:253px;top:2.94px;font-size:12px;line-height:12px;color:#000;transform:scaleX(0.932);">Help</span>
<div class="s1" style="left:280px;top:1px;width:96px;height:16px;background:#c6c3c6"></div>
<span style="left:283px;top:2.94px;font-size:12px;line-height:12px;color:#000;transform:scaleX(0.943);">Triggered</span>
<div class="s1" style="left:377px;top:1px;width:161px;height:16px;background:#c6c3c6"></div>
<div style="left:538px;top:1px;width:60px;height:16px;background:#c6c6c6;"></div>
<div style="left:538px;top:16px;width:61px;height:1px;background:#fff;"></div>
<div style="left:598px;top:1px;width:1px;height:16px;background:#fff;"></div>
<span style="left:541px;top:0.57px;font-size:13.5px;line-height:13.5px;color:#101080;font-family:'Liberation Serif',serif;font-weight:bold;transform:scaleX(0.853);">Tektronix</span>
<svg style="left:578px;top:8px" width="12" height="8" viewBox="0 0 12 8" ><path d="M1 7L10 1" stroke="#d02020" stroke-width="1" fill="none"/></svg>
<div class="r1" style="left:604px;top:2px;width:16px;height:14px;background:#c6c3c6"></div>
<div style="left:609px;top:11px;width:6px;height:2px;background:#000;"></div>
<div class="r1" style="left:622px;top:2px;width:16px;height:14px;background:#c6c3c6"></div>
<svg style="left:622px;top:2px" width="16" height="14" viewBox="0 0 16 14" ><path d="M4.5 3.5L11 10.5M11 3.5L4.5 10.5" stroke="#000" stroke-width="1.6" fill="none"/></svg>
<div style="left:0px;top:18px;width:640px;height:1px;background:#000;"></div>
<div style="left:0px;top:19px;width:640px;height:1px;background:#a8a8a8;"></div>
<div style="left:0px;top:20px;width:640px;height:1px;background:#fff;"></div>
<div class="r1" style="left:6px;top:24px;width:23px;height:23px;background:#c6c3c6"></div>
<div class="r1" style="left:29px;top:24px;width:23px;height:23px;background:#c6c3c6"></div>
<div class="r1" style="left:52px;top:24px;width:23px;height:23px;background:#c6c3c6"></div>
<div class="r1" style="left:75px;top:24px;width:23px;height:23px;background:#c6c3c6"></div>
<div class="r1" style="left:98px;top:24px;width:23px;height:23px;background:#c6c3c6"></div>
<div class="r1" style="left:121px;top:24px;width:23px;height:23px;background:#c6c3c6"></div>
<div class="r1" style="left:144px;top:24px;width:59px;height:23px;background:#20fc20"></div>
<span style="left:150.3px;top:29.64px;font-size:12px;line-height:12px;color:#083808;transform:scaleX(0.949);">Run/Stop</span>
<span style="left:206.5px;top:29.64px;font-size:12px;line-height:12px;color:#000;transform:scaleX(0.935);">Acq Mode</span>
<div class="s" style="left:260px;top:24px;width:72px;height:21px;background:#fff"></div>
<div class="r1" style="left:314px;top:26px;width:16px;height:17px;background:#c6c3c6"></div>
<svg style="left:314px;top:26px" width="16" height="17" viewBox="0 0 16 17" ><path d="M4.5 6.5h7l-3.5 4z" fill="#000"/></svg>
<span style="left:263.8px;top:28.64px;font-size:12px;line-height:12px;color:#000;transform:scaleX(0.868);">Sample</span>
<span style="left:337px;top:29.64px;font-size:12px;line-height:12px;color:#000;transform:scaleX(0.865);">Trig</span>
<div class="s" style="left:356px;top:24px;width:107px;height:21px;background:#fff"></div>
<div class="r1" style="left:445px;top:26px;width:16px;height:17px;background:#c6c3c6"></div>
<svg style="left:445px;top:26px" width="16" height="17" viewBox="0 0 16 17" ><path d="M4.5 6.5h7l-3.5 4z" fill="#000"/></svg>
<span style="left:360.7px;top:28.64px;font-size:12px;line-height:12px;color:#000;transform:scaleX(0.864);">External Direct</span>
<div class="s" style="left:467px;top:24px;width:84px;height:21px;background:#fff"></div>
<div class="r2" style="left:534px;top:26px;width:15px;height:8px;background:#c6c3c6"></div>
<div class="r2" style="left:534px;top:35px;width:15px;height:8px;background:#c6c3c6"></div>
<svg style="left:534px;top:26px" width="15" height="17" viewBox="0 0 15 17" ><path d="M5.5 5.2h4l-2-2.4z M5.5 11.8h4l-2 2.4z" fill="#000"/></svg>
<div class="r2" style="left:520px;top:26px;width:14px;height:17px;background:#c6c3c6"></div>
<svg style="left:520px;top:26px" width="14" height="17" viewBox="0 0 14 17" shape-rendering="crispEdges"><rect x="3" y="3" width="8" height="10" fill="#000"/><rect x="4" y="4" width="6" height="8" fill="#c6c3c6"/><rect x="5" y="5" width="4" height="3" fill="#000"/><rect x="6" y="6" width="2" height="1" fill="#c6c3c6"/><rect x="5" y="9" width="1" height="2" fill="#000"/><rect x="8" y="9" width="1" height="2" fill="#000"/></svg>
<span style="left:470px;top:28.64px;font-size:12px;line-height:12px;color:#000;transform:scaleX(0.903);">-205.2mV</span>
<div class="r1" style="left:575px;top:24px;width:33px;height:23px;background:#c6c3c6"></div>
<span style="left:583px;top:30.64px;font-size:12px;line-height:12px;color:#fff;transform:scaleX(0.936);">App</span>
<span style="left:582px;top:29.64px;font-size:12px;line-height:12px;color:#848284;transform:scaleX(0.936);">App</span>
<div class="r1" style="left:613px;top:24px;width:24px;height:23px;background:#c6c3c6"></div>
<svg style="left:613px;top:24px" width="24" height="23" viewBox="0 0 24 23" ><path d="M4 3v13l3-3 2.5 5.5 2-1L9 12h4z" fill="#000"/></svg>
<span style="left:624.6px;top:27.06px;font-size:16px;line-height:16px;color:#1414a0;font-weight:bold;transform:scaleX(1.073);">?</span>
<div style="left:0px;top:50px;width:527px;height:1px;background:#848284;"></div>
<div style="left:0px;top:51px;width:527px;height:1px;background:#fff;"></div>
<div class="s" style="left:11px;top:53px;width:52px;height:21px;background:#fff"></div>
<div class="r1" style="left:48px;top:55px;width:13px;height:17px;background:#c6c3c6"></div>
<svg style="left:48px;top:55px" width="13" height="17" viewBox="0 0 13 17" ><path d="M3.0 6.5h7l-3.5 4z" fill="#000"/></svg>
<span style="left:15.5px;top:57.64px;font-size:12px;line-height:12px;color:#000;transform:scaleX(0.882);">Pulse</span>
<div class="s" style="left:65px;top:53px;width:71px;height:21px;background:#fff"></div>
<div class="r1" style="left:121px;top:55px;width:13px;height:17px;background:#c6c3c6"></div>
<svg style="left:121px;top:55px" width="13" height="17" viewBox="0 0 13 17" ><path d="M3.0 6.5h7l-3.5 4z" fill="#000"/></svg>
<span style="left:68.5px;top:57.64px;font-size:12px;line-height:12px;color:#000;transform:scaleX(0.881);">Amplitude</span>
<div class="r1" style="left:140px;top:54px;width:23px;height:22px;background:#c6c3c6"></div>
<div class="r1" style="left:163px;top:54px;width:23px;height:22px;background:#c6c3c6"></div>
<div class="r1" style="left:186px;top:54px;width:23px;height:22px;background:#c6c3c6"></div>
<div class="r1" style="left:209px;top:54px;width:23px;height:22px;background:#c6c3c6"></div>
<div class="r1" style="left:232px;top:54px;width:23px;height:22px;background:#c6c3c6"></div>
<div class="r1" style="left:255px;top:54px;width:23px;height:22px;background:#c6c3c6"></div>
<div class="r1" style="left:278px;top:54px;width:23px;height:22px;background:#c6c3c6"></div>
<div class="r1" style="left:301px;top:54px;width:23px;height:22px;background:#c6c3c6"></div>
<div class="r1" style="left:324px;top:54px;width:23px;height:22px;background:#c6c3c6"></div>
<div class="r1" style="left:347px;top:54px;width:23px;height:22px;background:#c6c3c6"></div>
<div class="r1" style="left:370px;top:54px;width:23px;height:22px;background:#c6c3c6"></div>
<div class="r1" style="left:393px;top:54px;width:23px;height:22px;background:#c6c3c6"></div>
<div class="r1" style="left:416px;top:54px;width:23px;height:22px;background:#c6c3c6"></div>
<div class="r1" style="left:439px;top:54px;width:23px;height:22px;background:#c6c3c6"></div>
<div class="r1" style="left:527px;top:52px;width:23px;height:22px;background:#c6c3c6"></div>
<div class="r1" style="left:596px;top:52px;width:23px;height:22px;background:#c6c3c6"></div>
<div class="r1" style="left:619px;top:52px;width:23px;height:22px;background:#c6c3c6"></div>
<div class="p" style="left:550px;top:52px;width:23px;height:22px;background:#e4e4e4"></div>
<div class="p" style="left:573px;top:52px;width:23px;height:22px;background:#e4e4e4"></div>
<div style="left:527px;top:76px;width:1px;height:376px;background:#fff;"></div>
<div style="left:532px;top:77px;width:102px;height:15px;background:#848284;"></div>
<span style="left:533.5px;top:77.69px;font-size:11px;line-height:11px;color:#cccacc;font-family:'DejaVu Sans',sans-serif;font-weight:bold;transform:scaleX(0.938);">PhaseRef(C7_C8)</span>
<div class="p1" style="left:532px;top:92px;width:103px;height:19px;background:#c6c3c6"></div>
<span style="left:535.5px;top:96.11px;font-size:10.5px;line-height:10.5px;color:#000;transform:scaleX(1.014);">Off</span>
<div style="left:532px;top:117px;width:102px;height:16px;background:#848284;"></div>
<span style="left:533.5px;top:118.49px;font-size:11px;line-height:11px;color:#cccacc;font-family:'DejaVu Sans',sans-serif;font-weight:bold;transform:scaleX(0.936);">Waveform</span>
<div class="p1" style="left:532px;top:133px;width:103px;height:22px;background:#c6c3c6"></div>
<div style="left:534px;top:134px;width:6px;height:20px;background:#18f818;"></div>
<span style="left:542.5px;top:138.61px;font-size:10.5px;line-height:10.5px;color:#000;transform:scaleX(1.010);">C5 50.00mV/div</span>
<div class="p1" style="left:532px;top:155px;width:103px;height:22px;background:#c6c3c6"></div>
<div style="left:534px;top:156px;width:6px;height:20px;background:#18f818;"></div>
<span style="left:535px;top:160.51px;font-size:10.5px;line-height:10.5px;color:#000;transform:scaleX(0.958);">1</span>
<span style="left:542px;top:160.51px;font-size:10.5px;line-height:10.5px;color:#000;transform:scaleX(1.019);">WfmDB C5</span>
<svg style="left:614px;top:159px" width="17.0" height="15.0" viewBox="0 0 17 15"><path d="M1.2 6.2L5 11L9.8 3.2L15 11.8" fill="none" stroke-linejoin="miter" stroke-width="6" stroke="#f8c830"/><path d="M1.2 6.2L5 11L9.8 3.2L15 11.8" fill="none" stroke-linejoin="miter" stroke-width="4.4" stroke="#e01830"/><path d="M1.2 6.2L5 11L9.8 3.2L15 11.8" fill="none" stroke-linejoin="miter" stroke-width="3" stroke="#d010c8"/><path d="M1.2 6.2L5 11L9.8 3.2L15 11.8" fill="none" stroke-linejoin="miter" stroke-width="1.6" stroke="#4010d0"/></svg>
<div class="r1" style="left:532px;top:177px;width:103px;height:22px;background:#c6c3c6"></div>
<div style="left:534px;top:178px;width:6px;height:20px;background:#18f818;"></div>
<span style="left:535px;top:182.51px;font-size:10.5px;line-height:10.5px;color:#000;transform:scaleX(0.958);">2</span>
<span style="left:542px;top:182.51px;font-size:10.5px;line-height:10.5px;color:#000;transform:scaleX(1.019);">WfmDB C1</span>
<svg style="left:614px;top:181px" width="17.0" height="15.0" viewBox="0 0 17 15"><path d="M1.2 6.2L5 11L9.8 3.2L15 11.8" fill="none" stroke-linejoin="miter" stroke-width="6" stroke="#f8c830"/><path d="M1.2 6.2L5 11L9.8 3.2L15 11.8" fill="none" stroke-linejoin="miter" stroke-width="4.4" stroke="#e01830"/><path d="M1.2 6.2L5 11L9.8 3.2L15 11.8" fill="none" stroke-linejoin="miter" stroke-width="3" stroke="#d010c8"/><path d="M1.2 6.2L5 11L9.8 3.2L15 11.8" fill="none" stroke-linejoin="miter" stroke-width="1.6" stroke="#4010d0"/></svg>
<div class="r1" style="left:532px;top:199px;width:103px;height:22px;background:#c6c3c6"></div>
<div style="left:534px;top:200px;width:6px;height:20px;background:#f4f410;"></div>
<span style="left:535px;top:204.51px;font-size:10.5px;line-height:10.5px;color:#000;transform:scaleX(0.958);">3</span>
<span style="left:542px;top:204.51px;font-size:10.5px;line-height:10.5px;color:#000;transform:scaleX(1.019);">WfmDB C6</span>
<svg style="left:614px;top:203px" width="17.0" height="15.0" viewBox="0 0 17 15"><path d="M1.2 6.2L5 11L9.8 3.2L15 11.8" fill="none" stroke-linejoin="miter" stroke-width="6" stroke="#f8c830"/><path d="M1.2 6.2L5 11L9.8 3.2L15 11.8" fill="none" stroke-linejoin="miter" stroke-width="4.4" stroke="#e01830"/><path d="M1.2 6.2L5 11L9.8 3.2L15 11.8" fill="none" stroke-linejoin="miter" stroke-width="3" stroke="#d010c8"/><path d="M1.2 6.2L5 11L9.8 3.2L15 11.8" fill="none" stroke-linejoin="miter" stroke-width="1.6" stroke="#4010d0"/></svg>
<div style="left:532px;top:227px;width:102px;height:16px;background:#848284;"></div>
<span style="left:533.5px;top:229.29px;font-size:11px;line-height:11px;color:#cccacc;font-family:'DejaVu Sans',sans-serif;font-weight:bold;transform:scaleX(0.928);">Measurement</span>
<div class="r1" style="left:532px;top:244px;width:102px;height:31px;background:#c6c3c6"></div>
<div style="left:534px;top:245px;width:6px;height:29px;background:#18f818;"></div>
<span style="left:535px;top:246.71px;font-size:10.5px;line-height:10.5px;color:#000;transform:scaleX(0.958);">1</span>
<span style="left:542.3px;top:246.71px;font-size:10.5px;line-height:10.5px;color:#000;transform:scaleX(1.023);">Rise</span>
<span style="left:577px;top:246.71px;font-size:10.5px;line-height:10.5px;color:#000;transform:scaleX(0.967);">C5</span>
<span style="left:562px;top:260.91px;font-size:10.5px;line-height:10.5px;color:#000;transform:scaleX(1.029);">272.0000ps</span>
<svg style="left:602.5px;top:246.5px" width="15" height="11" viewBox="0 0 15 11" ><path d="M0.8 1.2H14.2M0.8 9.2H14.2M0.8 1.2L4 5.2L0.8 9.2M14.2 1.2L11 5.2L14.2 9.2M4.2 1.2L7.5 5.2L10.8 1.2M4.2 9.2L7.5 5.2L10.8 9.2" fill="none" stroke="#000" stroke-width="1.1"/></svg>
<svg style="left:617.5px;top:245.5px" width="16.15" height="14.25" viewBox="0 0 17 15"><path d="M1.2 6.2L5 11L9.8 3.2L15 11.8" fill="none" stroke-linejoin="miter" stroke-width="6" stroke="#f8c830"/><path d="M1.2 6.2L5 11L9.8 3.2L15 11.8" fill="none" stroke-linejoin="miter" stroke-width="4.4" stroke="#e01830"/><path d="M1.2 6.2L5 11L9.8 3.2L15 11.8" fill="none" stroke-linejoin="miter" stroke-width="3" stroke="#d010c8"/><path d="M1.2 6.2L5 11L9.8 3.2L15 11.8" fill="none" stroke-linejoin="miter" stroke-width="1.6" stroke="#4010d0"/></svg>
<div class="r1" style="left:532px;top:276px;width:102px;height:31px;background:#c6c3c6"></div>
<div style="left:534px;top:277px;width:6px;height:29px;background:#18f818;"></div>
<span style="left:535px;top:278.71px;font-size:10.5px;line-height:10.5px;color:#000;transform:scaleX(0.958);">2</span>
<span style="left:542.3px;top:278.71px;font-size:10.5px;line-height:10.5px;color:#000;transform:scaleX(1.034);">Fall</span>
<span style="left:577px;top:278.71px;font-size:10.5px;line-height:10.5px;color:#000;transform:scaleX(0.967);">C5</span>
<span style="left:562px;top:292.91px;font-size:10.5px;line-height:10.5px;color:#000;transform:scaleX(1.029);">264.0000ps</span>
<svg style="left:602.5px;top:278.5px" width="15" height="11" viewBox="0 0 15 11" ><path d="M0.8 1.2H14.2M0.8 9.2H14.2M0.8 1.2L4 5.2L0.8 9.2M14.2 1.2L11 5.2L14.2 9.2M4.2 1.2L7.5 5.2L10.8 1.2M4.2 9.2L7.5 5.2L10.8 9.2" fill="none" stroke="#000" stroke-width="1.1"/></svg>
<svg style="left:617.5px;top:277.5px" width="16.15" height="14.25" viewBox="0 0 17 15"><path d="M1.2 6.2L5 11L9.8 3.2L15 11.8" fill="none" stroke-linejoin="miter" stroke-width="6" stroke="#f8c830"/><path d="M1.2 6.2L5 11L9.8 3.2L15 11.8" fill="none" stroke-linejoin="miter" stroke-width="4.4" stroke="#e01830"/><path d="M1.2 6.2L5 11L9.8 3.2L15 11.8" fill="none" stroke-linejoin="miter" stroke-width="3" stroke="#d010c8"/><path d="M1.2 6.2L5 11L9.8 3.2L15 11.8" fill="none" stroke-linejoin="miter" stroke-width="1.6" stroke="#4010d0"/></svg>
<div class="p1" style="left:532px;top:307px;width:103px;height:31px;background:#c6c3c6"></div>
<div style="left:534px;top:308px;width:6px;height:29px;background:#18f818;"></div>
<span style="left:535px;top:309.71px;font-size:10.5px;line-height:10.5px;color:#000;transform:scaleX(0.958);">3</span>
<span style="left:542.3px;top:309.71px;font-size:10.5px;line-height:10.5px;color:#000;">Ampl</span>
<span style="left:577px;top:309.71px;font-size:10.5px;line-height:10.5px;color:#000;transform:scaleX(0.967);">C5</span>
<span style="left:562px;top:323.91px;font-size:10.5px;line-height:10.5px;color:#000;transform:scaleX(1.024);">243.5554mV</span>
<svg style="left:602.5px;top:309.5px" width="15" height="11" viewBox="0 0 15 11" ><path d="M0.8 1.2H14.2M0.8 9.2H14.2M0.8 1.2L4 5.2L0.8 9.2M14.2 1.2L11 5.2L14.2 9.2M4.2 1.2L7.5 5.2L10.8 1.2M4.2 9.2L7.5 5.2L10.8 9.2" fill="none" stroke="#000" stroke-width="1.1"/></svg>
<svg style="left:617.5px;top:308.5px" width="16.15" height="14.25" viewBox="0 0 17 15"><path d="M1.2 6.2L5 11L9.8 3.2L15 11.8" fill="none" stroke-linejoin="miter" stroke-width="6" stroke="#f8c830"/><path d="M1.2 6.2L5 11L9.8 3.2L15 11.8" fill="none" stroke-linejoin="miter" stroke-width="4.4" stroke="#e01830"/><path d="M1.2 6.2L5 11L9.8 3.2L15 11.8" fill="none" stroke-linejoin="miter" stroke-width="3" stroke="#d010c8"/><path d="M1.2 6.2L5 11L9.8 3.2L15 11.8" fill="none" stroke-linejoin="miter" stroke-width="1.6" stroke="#4010d0"/></svg>
<div style="left:0px;top:450px;width:527px;height:1px;background:#909090;"></div>
<div style="left:0px;top:452px;width:640px;height:1px;background:#fff;"></div>
<div class="r1" style="left:0px;top:454px;width:45px;height:22px;background:#c6c3c6"></div>
<div style="left:2px;top:456px;width:5px;height:19px;background:#18f818;"></div>
<span style="left:9.3px;top:459.64px;font-size:12px;line-height:12px;color:#000;transform:scaleX(0.899);">C5</span>
<svg style="left:29px;top:461px" width="12" height="8" viewBox="0 0 12 8" ><path d="M1 6.5h10L6 1z" fill="#000"/></svg>
<div class="s" style="left:51px;top:454px;width:83px;height:22px;background:#fff"></div>
<div class="r2" style="left:117px;top:456px;width:15px;height:9px;background:#c6c3c6"></div>
<div class="r2" style="left:117px;top:465px;width:15px;height:9px;background:#c6c3c6"></div>
<svg style="left:117px;top:456px" width="15" height="18" viewBox="0 0 15 18" ><path d="M5.5 5.7h4l-2-2.4z M5.5 12.3h4l-2 2.4z" fill="#000"/></svg>
<div class="r2" style="left:103px;top:456px;width:14px;height:18px;background:#c6c3c6"></div>
<svg style="left:103px;top:456px" width="14" height="18" viewBox="0 0 14 18" shape-rendering="crispEdges"><rect x="3" y="4" width="8" height="10" fill="#000"/><rect x="4" y="5" width="6" height="8" fill="#c6c3c6"/><rect x="5" y="6" width="4" height="3" fill="#000"/><rect x="6" y="7" width="2" height="1" fill="#c6c3c6"/><rect x="5" y="10" width="1" height="2" fill="#000"/><rect x="8" y="10" width="1" height="2" fill="#000"/></svg>
<span style="left:53.7px;top:458.81px;font-size:10.5px;line-height:10.5px;color:#000;transform:scaleX(1.034);">50.00mV/</span>
<div class="s" style="left:137px;top:454px;width:83px;height:22px;background:#fff"></div>
<div class="r2" style="left:203px;top:456px;width:15px;height:9px;background:#c6c3c6"></div>
<div class="r2" style="left:203px;top:465px;width:15px;height:9px;background:#c6c3c6"></div>
<svg style="left:203px;top:456px" width="15" height="18" viewBox="0 0 15 18" ><path d="M5.5 5.7h4l-2-2.4z M5.5 12.3h4l-2 2.4z" fill="#000"/></svg>
<div class="r2" style="left:189px;top:456px;width:14px;height:18px;background:#c6c3c6"></div>
<svg style="left:189px;top:456px" width="14" height="18" viewBox="0 0 14 18" shape-rendering="crispEdges"><rect x="3" y="4" width="8" height="10" fill="#000"/><rect x="4" y="5" width="6" height="8" fill="#c6c3c6"/><rect x="5" y="6" width="4" height="3" fill="#000"/><rect x="6" y="7" width="2" height="1" fill="#c6c3c6"/><rect x="5" y="10" width="1" height="2" fill="#000"/><rect x="8" y="10" width="1" height="2" fill="#000"/></svg>
<span style="left:140px;top:458.81px;font-size:10.5px;line-height:10.5px;color:#000;transform:scaleX(0.949);">0.0V</span>
<div class="s" style="left:227px;top:454px;width:30px;height:22px;background:#fff"></div>
<span style="left:231.5px;top:459.19px;font-size:11px;line-height:11px;color:#000;transform:scaleX(0.944);">Main</span>
<div class="r1" style="left:257px;top:454px;width:30px;height:22px;background:#c6c3c6"></div>
<svg style="left:257px;top:454px" width="30" height="22" viewBox="0 0 30 22" ><circle cx="13" cy="8.5" r="5.3" fill="none" stroke="#000" stroke-width="1.3"/><path d="M17 12.8L22.5 18" stroke="#000" stroke-width="2.4" stroke-linecap="round"/></svg>
<span style="left:267.3px;top:457.56px;font-size:9.5px;line-height:9.5px;color:#000;font-weight:bold;transform:scaleX(1.038);">1</span>
<div class="r1" style="left:287px;top:454px;width:30px;height:22px;background:#c6c3c6"></div>
<svg style="left:287px;top:454px" width="30" height="22" viewBox="0 0 30 22" ><circle cx="13" cy="8.5" r="5.3" fill="none" stroke="#000" stroke-width="1.3"/><path d="M17 12.8L22.5 18" stroke="#000" stroke-width="2.4" stroke-linecap="round"/></svg>
<span style="left:297.3px;top:457.56px;font-size:9.5px;line-height:9.5px;color:#000;font-weight:bold;transform:scaleX(1.038);">2</span>
<div class="s" style="left:324px;top:454px;width:88px;height:22px;background:#fff"></div>
<div class="r2" style="left:395px;top:456px;width:15px;height:9px;background:#c6c3c6"></div>
<div class="r2" style="left:395px;top:465px;width:15px;height:9px;background:#c6c3c6"></div>
<svg style="left:395px;top:456px" width="15" height="18" viewBox="0 0 15 18" ><path d="M5.5 5.7h4l-2-2.4z M5.5 12.3h4l-2 2.4z" fill="#000"/></svg>
<div class="r2" style="left:381px;top:456px;width:14px;height:18px;background:#c6c3c6"></div>
<svg style="left:381px;top:456px" width="14" height="18" viewBox="0 0 14 18" shape-rendering="crispEdges"><rect x="3" y="4" width="8" height="10" fill="#000"/><rect x="4" y="5" width="6" height="8" fill="#c6c3c6"/><rect x="5" y="6" width="4" height="3" fill="#000"/><rect x="6" y="7" width="2" height="1" fill="#c6c3c6"/><rect x="5" y="10" width="1" height="2" fill="#000"/><rect x="8" y="10" width="1" height="2" fill="#000"/></svg>
<span style="left:327px;top:458.81px;font-size:10.5px;line-height:10.5px;color:#000;transform:scaleX(1.050);">200.000ps</span>
<div class="s" style="left:416px;top:454px;width:79px;height:22px;background:#fff"></div>
<div class="r2" style="left:478px;top:456px;width:15px;height:9px;background:#c6c3c6"></div>
<div class="r2" style="left:478px;top:465px;width:15px;height:9px;background:#c6c3c6"></div>
<svg style="left:478px;top:456px" width="15" height="18" viewBox="0 0 15 18" ><path d="M5.5 5.7h4l-2-2.4z M5.5 12.3h4l-2 2.4z" fill="#000"/></svg>
<div class="r2" style="left:464px;top:456px;width:14px;height:18px;background:#c6c3c6"></div>
<svg style="left:464px;top:456px" width="14" height="18" viewBox="0 0 14 18" shape-rendering="crispEdges"><rect x="3" y="4" width="8" height="10" fill="#000"/><rect x="4" y="5" width="6" height="8" fill="#c6c3c6"/><rect x="5" y="6" width="4" height="3" fill="#000"/><rect x="6" y="7" width="2" height="1" fill="#c6c3c6"/><rect x="5" y="10" width="1" height="2" fill="#000"/><rect x="8" y="10" width="1" height="2" fill="#000"/></svg>
<span style="left:418.7px;top:458.81px;font-size:10.5px;line-height:10.5px;color:#000;transform:scaleX(1.053);">49.920n</span>
<div class="r1" style="left:498px;top:454px;width:27px;height:23px;background:#c6c3c6"></div>
<svg style="left:498px;top:454px" width="27" height="23" viewBox="0 0 27 23" ><rect x="3.5" y="1.5" width="4.6" height="15" rx="2.2" fill="#fff" stroke="#000" stroke-width="1.1"/><rect x="4.6" y="6" width="2.4" height="10" fill="#10d010"/><circle cx="5.8" cy="17" r="4.4" fill="#10e010" stroke="#084008" stroke-width="0.8"/><circle cx="13.6" cy="7" r="1.9" fill="none" stroke="#000" stroke-width="1.3"/></svg>
<span style="left:514.8px;top:457.33px;font-size:16.5px;line-height:16.5px;color:#000;font-weight:bold;transform:scaleX(0.654);">C</span>
<div class="s1" style="left:529px;top:455px;width:110px;height:22px;background:#c6c3c6"></div>
<span style="left:536.5px;top:460.09px;font-size:11px;line-height:11px;color:#000;transform:scaleX(1.022);">1:01 PM 2/25/2008</span>
<svg style="left:6px;top:24px" width="23" height="23" viewBox="0 0 23 23"><path d="M6.8 8.6L9 3.6H16.6L15.2 8.6Z" fill="#fff" stroke="#000" stroke-width="1.2"/><path d="M9.3 5.3H15M8.7 6.8H14.5" stroke="#666" stroke-width=".8"/><path d="M3.2 10.8L6 8.6H17L19.4 10.8Z" fill="#d8d8d8" stroke="#000" stroke-width="1.2"/><rect x="3.2" y="10.8" width="16.2" height="3.8" fill="#f4f4f4" stroke="#000" stroke-width="1.2"/><rect x="8" y="12" width="6.5" height="1.5" fill="#d0d048"/><rect x="15.5" y="12" width="2.5" height="1.5" fill="#888"/><rect x="4.2" y="14.6" width="14.2" height="2.2" fill="#c8c8c8" stroke="#000" stroke-width="1.2"/></svg>
<svg style="left:29px;top:24px" width="23" height="23" viewBox="0 0 23 23"><path d="M7.2 7.8L16 16" stroke="#000" stroke-width="2.3" stroke-linecap="round"/><path d="M8.6 5.2A2.6 2.6 0 1 0 8.6 8.9" fill="none" stroke="#000" stroke-width="2"/><path d="M14.5 8.8L6.6 16" stroke="#000" stroke-width="3" stroke-linecap="round"/><path d="M14.5 8.8L6.6 16" stroke="#8a4a10" stroke-width="1.4" stroke-linecap="round"/><path d="M9.9 6.6L12.7 4.2L17.2 5.3L18.9 9.2L17.2 10.6L15.8 8.2L12.5 7.8Z" fill="#80803c" stroke="#202000" stroke-width=".8"/></svg>
<svg style="left:52px;top:24px" width="23" height="23" viewBox="0 0 23 23"><text x="5.2" y="13.6" font-family="'Liberation Serif',serif" font-style="italic" font-weight="bold" font-size="14" fill="#000" stroke="#000" stroke-width=".3">f</text><text x="12" y="14.6" font-family="'Liberation Serif',serif" font-style="italic" font-weight="bold" font-size="10.5" fill="#000" stroke="#000" stroke-width=".3">x</text></svg>
<svg style="left:75px;top:24px" width="23" height="23" viewBox="0 0 23 23"><path d="M2.5 9L5.8 12L11.3 5L16.6 13.6L19.6 10" fill="none" stroke="#f0c020" stroke-width="6.6" stroke-linejoin="round"/><path d="M2.5 9L5.8 12L11.3 5L16.6 13.6L19.6 10" fill="none" stroke="#e82020" stroke-width="5" stroke-linejoin="round"/><path d="M2.5 9L5.8 12L11.3 5L16.6 13.6L19.6 10" fill="none" stroke="#d818d0" stroke-width="3.4" stroke-linejoin="round"/><path d="M2.5 9L5.8 12L11.3 5L16.6 13.6L19.6 10" fill="none" stroke="#2828e8" stroke-width="1.7" stroke-linejoin="round"/></svg>
<svg style="left:98px;top:24px" width="23" height="23" viewBox="0 0 23 23"><path d="M7 12.8V7.2H11V13.7H15V8" fill="none" stroke="#1414e0" stroke-width="2.4"/><path d="M3.2 6V3.2H6M16 3.2H18.9V6M3.2 14.2V17H6M16 17H18.9V14.2" fill="none" stroke="#000" stroke-width="1.7"/></svg>
<svg style="left:121px;top:24px" width="23" height="23" viewBox="0 0 23 23"><path d="M4.9 12L12.2 5.9H17.8L10.5 12Z" fill="#f4f460" stroke="#000" stroke-width="1"/><path d="M4.9 12H10.5V14.9H4.9Z" fill="#fffff0" stroke="#000" stroke-width="1"/><path d="M10.5 12L17.8 5.9V8.9L10.5 14.9Z" fill="#e8e840" stroke="#000" stroke-width="1"/></svg>
<svg style="left:140px;top:54px" width="23" height="22" viewBox="0 0 23 22"><path d="M5.5 6.3h1.5M15 6.3h1.5" fill="none" stroke="#30e030" stroke-width="1.2"/><path d="M4 14.3H5.5V6.5H9.5V14.3H12V6.5H16V14.3H18" fill="none" stroke="#0c0c78" stroke-width="1.45"/></svg>
<svg style="left:163px;top:54px" width="23" height="22" viewBox="0 0 23 22"><path d="M4 15.6H19" fill="none" stroke="#30e030" stroke-width="1.2"/><path d="M3.7 7.6V14.9H6.5V7.6H8.7V14.9H11.6V7.6H13.8V14.9H16.6V7.6H18.6V14.9" fill="none" stroke="#0c0c78" stroke-width="1.45"/></svg>
<svg style="left:186px;top:54px" width="23" height="22" viewBox="0 0 23 22"><path d="M8 7H6V15.4H8M17.5 7h2v8.4h-2" fill="none" stroke="#30e030" stroke-width="1.4"/><path d="M10 14.9H12.2V8Q12.2 6.4 13.9 6.4Q15.6 6.4 15.6 8V14.9H18.4" fill="none" stroke="#0c0c78" stroke-width="1.4"/></svg>
<svg style="left:209px;top:54px" width="23" height="22" viewBox="0 0 23 22"><path d="M5 11H18.5" fill="none" stroke="#30e030" stroke-width="1.4"/><path d="M4 14.9Q6 14.9 6 12.5V9.5Q6 7.3 8 7.3Q10 7.3 10 9.5V12.5Q10 14.9 11.5 14.9Q13 14.9 13 12.5V9.5Q13 7.3 15 7.3Q17 7.3 17 9.5V12.5Q17 14.9 19 14.9" fill="none" stroke="#0c0c78" stroke-width="1.45"/></svg>
<svg style="left:232px;top:54px" width="23" height="22" viewBox="0 0 23 22"><path d="M3.7 6.4H18.9" fill="none" stroke="#30e030" stroke-width="1.6"/><path d="M3.7 14.3H5.4V7.6H9.9V14.3H12.7V7.6H16.6V14.3H18.9" fill="none" stroke="#0c0c78" stroke-width="1.45"/></svg>
<svg style="left:255px;top:54px" width="23" height="22" viewBox="0 0 23 22"><path d="M4.3 15.3H17.8" fill="none" stroke="#30e030" stroke-width="1.6"/><path d="M4.3 7.6H6.6V13.7H9.4V7.6H11.6V13.7H14.4V7.6H17.8" fill="none" stroke="#0c0c78" stroke-width="1.45"/></svg>
<svg style="left:278px;top:54px" width="23" height="22" viewBox="0 0 23 22"><path d="M2.5 5.3H19.4M2.5 15.2H19.4" fill="none" stroke="#30e030" stroke-width="2"/><path d="M3 12.6H5V9Q5 7 7 7Q9 7 9 9V11Q9 13 10.5 13Q12 13 12 11V9Q12 7 14 7Q16 7 16 9V11Q16 13 17.5 13Q19 13 19 11V8" fill="none" stroke="#0c0c78" stroke-width="1.45"/></svg>
<svg style="left:301px;top:54px" width="23" height="22" viewBox="0 0 23 22"><path d="M3.1 10.6H18.9" fill="none" stroke="#30e030" stroke-width="1.8"/><path d="M4 14.9Q6 14.9 6 12.5V9.5Q6 7.3 8 7.3Q10 7.3 10 9.5V12.5Q10 14.9 11.5 14.9Q13 14.9 13 12.5V9.5Q13 7.3 15 7.3Q17 7.3 17 9.5V12.5Q17 14.9 19 14.9" fill="none" stroke="#0c0c78" stroke-width="1.45"/></svg>
<svg style="left:324px;top:54px" width="23" height="22" viewBox="0 0 23 22"><path d="M3.2 5.3H19.5M3.2 8.7H19.5" fill="none" stroke="#30e030" stroke-width="1.8"/><path d="M3.2 15.4H6Q8 15.4 9.5 11Q11 7 12.5 7Q15 7.5 18.4 9.2" fill="none" stroke="#0c0c78" stroke-width="1.45"/></svg>
<svg style="left:347px;top:54px" width="23" height="22" viewBox="0 0 23 22"><path d="M3 11.5H18.8M3 14.6H18.8M3 16.6H18.8" fill="none" stroke="#30e030" stroke-width="1.3"/><path d="M3 5.9H5.9Q8 6 10 11Q11.5 15 12.5 14.9Q13.5 12 15 12H18.8" fill="none" stroke="#0c0c78" stroke-width="1.45"/></svg>
<svg style="left:370px;top:54px" width="23" height="22" viewBox="0 0 23 22"><path d="M2.6 11L4 8.5L5.5 9.5L7 6.5L8.5 8.2L9.8 6.5L11 3.8L12.3 7L13.8 5.2L15 8.2L16.5 7L18 9L20 11L19.5 13L17.5 13.2L16 12.5L14.5 14.5L13 13.5L11.5 17.2L10 13.5L8 14.5L6 13L4 13.4Z" fill="#f01818"/><path d="M3.5 11H19" stroke="#800000" stroke-width=".8"/><path d="M13 14.6h3.4l-1.7 2.2z" fill="#000"/></svg>
<svg style="left:393px;top:54px" width="23" height="22" viewBox="0 0 23 22"><path d="M2.6 11L4 8.5L5.5 9.5L7 6.5L8.5 8.2L9.8 6.5L11 3.8L12.3 7L13.8 5.2L15 8.2L16.5 7L18 9L20 11L19.5 13L17.5 13.2L16 12.5L14.5 14.5L13 13.5L11.5 17.2L10 13.5L8 14.5L6 13L4 13.4Z" fill="#f01818"/><path d="M3.5 11H19" stroke="#800000" stroke-width=".8"/></svg>
<svg style="left:416px;top:54px" width="23" height="22" viewBox="0 0 23 22"><path d="M3.5 17H6V14H7.5V4H12.5V14H14V17H15.5" fill="none" stroke="#000" stroke-width="1.3"/><path d="M4 11.5h3M5.5 9.5v4M9 11.5h3M10.5 9.5v4" stroke="#f01818" stroke-width="1.1"/><text x="14.6" y="7.2" font-family="'Liberation Sans',sans-serif" font-weight="bold" font-size="7" fill="#000">d</text><text x="14.6" y="12.4" font-family="'Liberation Sans',sans-serif" font-weight="bold" font-size="7" fill="#000">B</text><text x="14.6" y="17.4" font-family="'Liberation Sans',sans-serif" font-weight="bold" font-size="7" fill="#000">m</text></svg>
<svg style="left:439px;top:54px" width="23" height="22" viewBox="0 0 23 22"><path d="M3.7 14.9H5.9V7Q5.9 5.3 7.5 5.3Q9 5.3 9 7V14.9" fill="none" stroke="#0c0c78" stroke-width="1.4"/><path d="M9 14.9H12.7V5.3H14" fill="none" stroke="#103010" stroke-width="1.3"/><path d="M15 5.3H18.3V14.9H15" fill="none" stroke="#e01818" stroke-width="1.3"/><circle cx="11.6" cy="4.9" r="1.2" fill="#30d060"/><circle cx="13.8" cy="15" r="1.1" fill="#30d060"/><circle cx="20.4" cy="13.7" r=".9" fill="#30d060"/></svg>
<svg style="left:527px;top:52px" width="23" height="22" viewBox="0 0 23 22"><path d="M2.1 8.8H17.8" stroke="#f0a0a0" stroke-width="2.6"/><path d="M2.1 8.8H17.8" stroke="#c81818" stroke-width="1.2"/><path d="M2.1 13.3H17.8" stroke="#f0a0a0" stroke-width="2.4"/><path d="M2.1 13.3H17.8" stroke="#c81818" stroke-width="1.2" stroke-dasharray="1.6 1.1"/></svg>
<svg style="left:550px;top:52px" width="23" height="22" viewBox="0 0 23 22"><path d="M3.8 8.5Q5.5 15.8 7.4 15.4Q9.5 15 11 9Q12.3 5.6 13.2 6Q14.6 6.5 16 12Q17.2 15.8 18.4 15.3Q19.6 14.6 20.2 13.5" fill="none" stroke="#18187a" stroke-width="1.8"/></svg>
<svg style="left:573px;top:52px" width="23" height="22" viewBox="0 0 23 22"><rect x="3.3" y="7.4" width="16.6" height="10.4" fill="#f8f810"/><path d="M3.3 7.8H19.9M3.3 17.4H19.9" stroke="#000" stroke-width="1" stroke-dasharray="1.5 1.2"/><path d="M7 7.4v2.6M11.6 7.4v2.6M16.2 7.4v2.6M7 17.8v-2.2M11.6 17.8v-2.2M16.2 17.8v-2.2" stroke="#000" stroke-width="1"/><text x="5.2" y="15" font-family="'Liberation Sans',sans-serif" font-weight="bold" font-size="6.5" fill="#202000">1</text><text x="9.8" y="15" font-family="'Liberation Sans',sans-serif" font-weight="bold" font-size="6.5" fill="#202000">2</text><text x="14.6" y="15" font-family="'Liberation Sans',sans-serif" font-weight="bold" font-size="6.5" fill="#202000">3</text></svg>
<svg style="left:596px;top:52px" width="23" height="22" viewBox="0 0 23 22"><path d="M2.9 15.6V14H4.2V12.8H5.4V11.5H6.5V12.3H7.4V9.5H8.3V10.5H9V7H9.8V4.7H10.7V7.5H11.4V6H12.3V9.8H13.2V8.8H14V11.5H15V10.8H15.8V13H17V14.2H18.1V15.6Z" fill="#10108c"/></svg>
<svg style="left:619px;top:52px" width="23" height="22" viewBox="0 0 23 22"><path d="M6 4.2V5.8H15.4V4.2M10.6 5.8V8.6M6 18V16.3H15.4V18M10.6 16.3V14.6" fill="none" stroke="#14148c" stroke-width="1.5"/><ellipse cx="10.6" cy="11.6" rx="3.6" ry="2.8" fill="none" stroke="#14148c" stroke-width="1.6"/></svg>
</div></body></html>
